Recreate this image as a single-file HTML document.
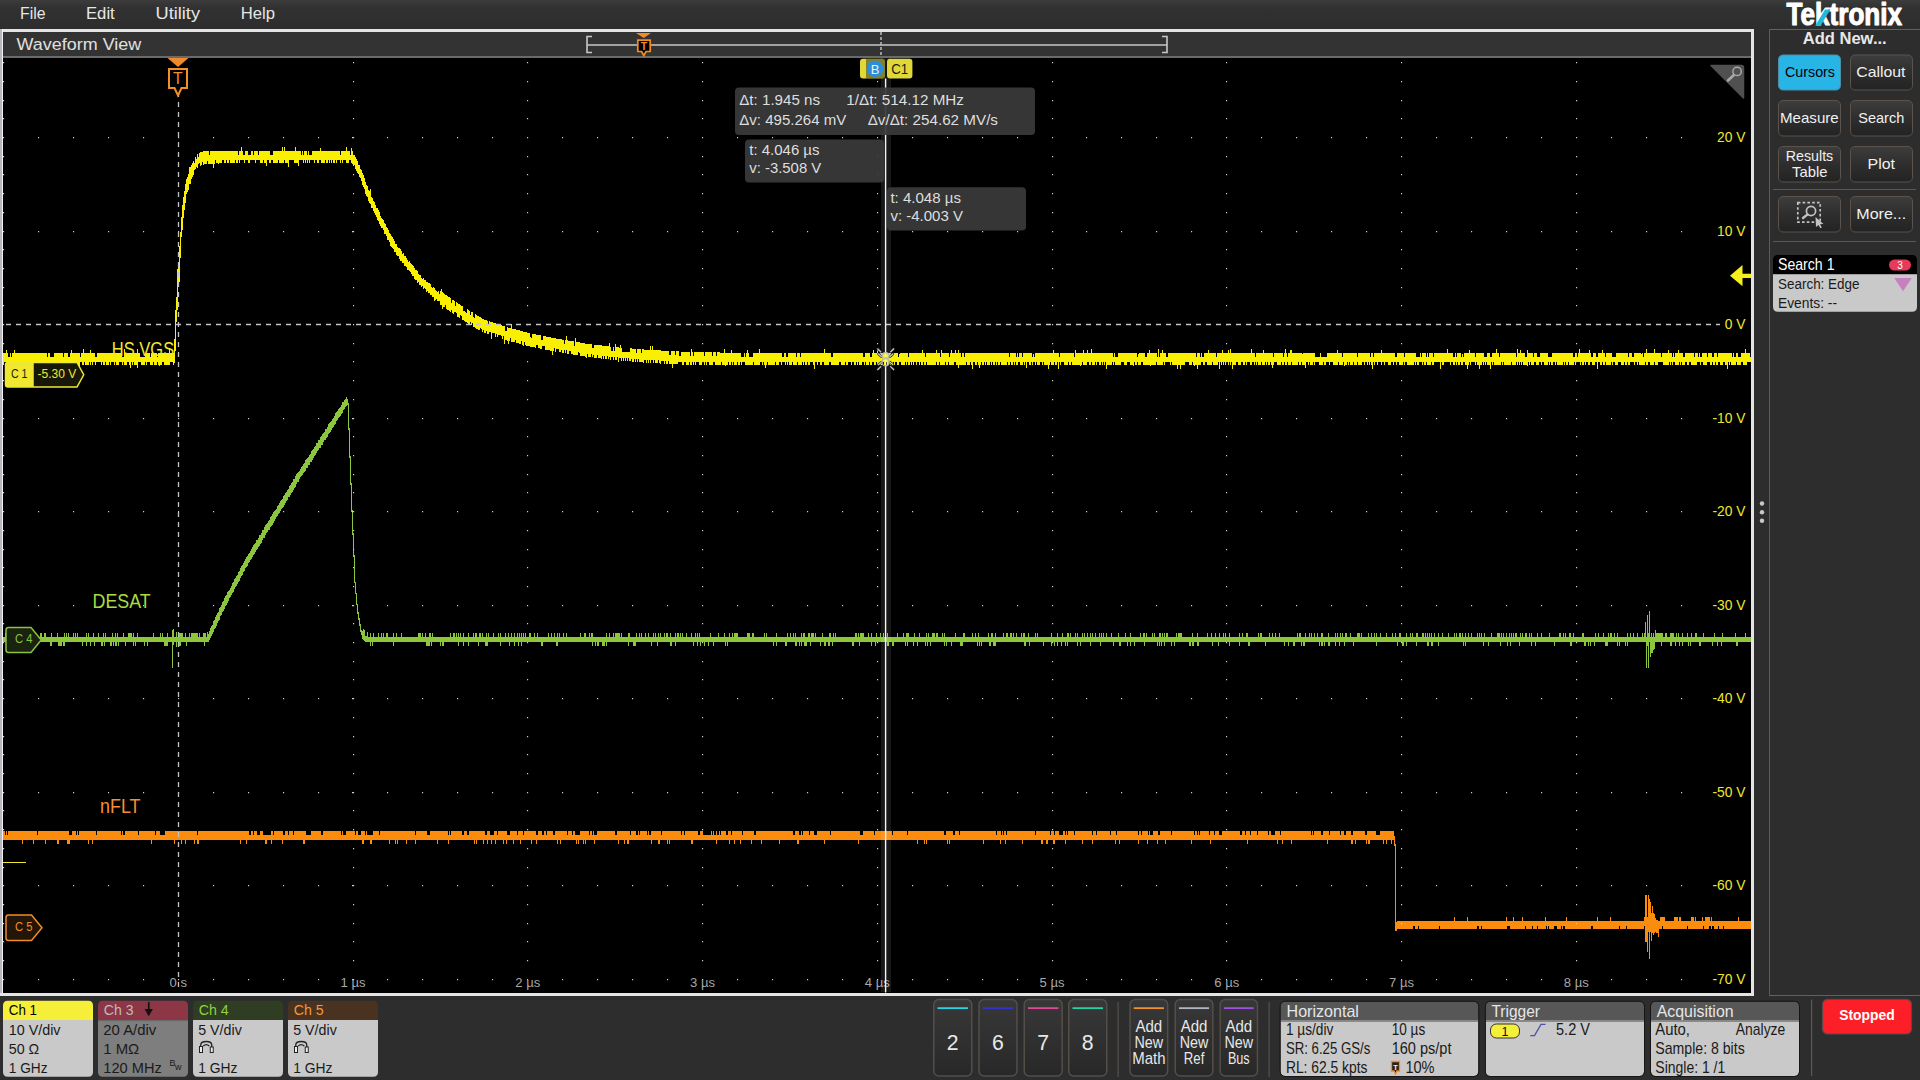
<!DOCTYPE html>
<html><head><meta charset="utf-8"><title>Waveform View</title>
<style>
html,body{margin:0;padding:0;}
body{width:1920px;height:1080px;overflow:hidden;position:relative;background:#2d2d2d;font-family:"Liberation Sans",sans-serif;}
#menubar{position:absolute;left:0;top:0;width:1920px;height:29px;background:linear-gradient(#3c3c3c 0px,#313131 8px,#2d2d2d 29px);}
#wave{position:absolute;left:0;top:0;width:1920px;height:1080px;}
svg text{font-family:"Liberation Sans",sans-serif;}
</style></head>
<body>
<div id="menubar"></div>
<svg id="wave" width="1920" height="1080" viewBox="0 0 1920 1080" font-family="Liberation Sans, sans-serif">
<defs>
<linearGradient id="btng" x1="0" y1="0" x2="0" y2="1"><stop offset="0" stop-color="#3d3d3d"/><stop offset="0.5" stop-color="#2e2e2e"/><stop offset="1" stop-color="#232323"/></linearGradient>
<linearGradient id="nbg" x1="0" y1="0" x2="0" y2="1"><stop offset="0" stop-color="#383838"/><stop offset="1" stop-color="#282828"/></linearGradient>
<clipPath id="gclip"><rect x="3" y="58" width="1748" height="935"/></clipPath>
</defs>
<rect x="3" y="58" width="1748" height="935" fill="#000"/>
<g clip-path="url(#gclip)">
<g shape-rendering="crispEdges" stroke-width="1" fill="none">
<path stroke="#fb8c0e" d="M3.5 831V840M4.5 831V840M5.5 835V840M6.5 831V840M7.5 835V840M8.5 831V840M9.5 831V840M10.5 831V840M11.5 831V840M12.5 831V840M13.5 831V840M14.5 831V840M15.5 831V840M16.5 831V840M17.5 831V840M18.5 831V840M19.5 831V840M20.5 831V840M21.5 831V840M22.5 831V844M23.5 831V840M24.5 831V840M25.5 831V840M26.5 831V840M27.5 831V840M28.5 831V840M29.5 831V840M30.5 831V840M31.5 831V840M32.5 831V840M33.5 831V844M34.5 831V840M35.5 831V840M36.5 831V840M37.5 835V840M38.5 831V840M39.5 831V840M40.5 831V840M41.5 831V840M42.5 831V840M43.5 831V840M44.5 831V840M45.5 831V844M46.5 831V840M47.5 831V840M48.5 831V840M49.5 831V840M50.5 831V840M51.5 831V840M52.5 831V840M53.5 831V840M54.5 831V840M55.5 831V840M56.5 831V840M57.5 831V844M58.5 831V844M59.5 831V840M60.5 831V840M61.5 831V840M62.5 831V840M63.5 831V840M64.5 831V840M65.5 831V840M66.5 831V840M67.5 831V844M68.5 831V844M69.5 835V844M70.5 835V840M71.5 835V840M72.5 831V840M73.5 831V840M74.5 831V840M75.5 831V840M76.5 835V840M77.5 831V840M78.5 835V840M79.5 831V840M80.5 831V840M81.5 831V840M82.5 831V840M83.5 831V840M84.5 831V840M85.5 831V840M86.5 831V840M87.5 831V840M88.5 831V844M89.5 831V840M90.5 831V840M91.5 831V840M92.5 831V844M93.5 831V840M94.5 831V840M95.5 831V840M96.5 835V840M97.5 831V840M98.5 831V840M99.5 831V840M100.5 831V840M101.5 831V840M102.5 831V840M103.5 831V840M104.5 831V840M105.5 831V840M106.5 831V840M107.5 831V840M108.5 831V840M109.5 831V840M110.5 831V840M111.5 831V840M112.5 831V840M113.5 831V840M114.5 831V840M115.5 831V840M116.5 831V840M117.5 831V840M118.5 831V840M119.5 831V840M120.5 831V840M121.5 835V840M122.5 831V840M123.5 835V840M124.5 835V840M125.5 831V840M126.5 831V840M127.5 831V840M128.5 831V840M129.5 831V840M130.5 831V840M131.5 831V840M132.5 831V840M133.5 831V840M134.5 831V840M135.5 831V840M136.5 831V840M137.5 831V840M138.5 835V840M139.5 831V840M140.5 831V840M141.5 831V840M142.5 831V840M143.5 831V840M144.5 831V840M145.5 831V840M146.5 831V840M147.5 831V840M148.5 831V840M149.5 831V840M150.5 831V840M151.5 831V844M152.5 831V840M153.5 831V840M154.5 831V840M155.5 835V840M156.5 831V840M157.5 831V840M158.5 831V840M159.5 831V840M160.5 835V840M161.5 835V840M162.5 835V840M163.5 835V840M164.5 835V840M165.5 831V840M166.5 831V840M167.5 831V840M168.5 831V840M169.5 831V840M170.5 831V840M171.5 831V840M172.5 831V840M173.5 831V840M174.5 831V844M175.5 831V840M176.5 831V840M177.5 831V840M178.5 831V840M179.5 831V840M180.5 831V840M181.5 831V844M182.5 831V840M183.5 831V840M184.5 831V840M185.5 831V844M186.5 831V840M187.5 831V840M188.5 831V840M189.5 831V840M190.5 831V840M191.5 831V840M192.5 831V840M193.5 831V840M194.5 831V844M195.5 831V840M196.5 831V840M197.5 835V844M198.5 831V844M199.5 831V840M200.5 831V840M201.5 831V840M202.5 831V840M203.5 831V840M204.5 831V840M205.5 831V840M206.5 831V840M207.5 831V840M208.5 831V840M209.5 831V840M210.5 831V840M211.5 831V840M212.5 831V840M213.5 831V840M214.5 831V840M215.5 831V840M216.5 831V840M217.5 831V840M218.5 831V840M219.5 831V840M220.5 831V840M221.5 831V840M222.5 831V840M223.5 831V840M224.5 831V840M225.5 831V840M226.5 831V840M227.5 831V840M228.5 831V840M229.5 831V840M230.5 831V840M231.5 831V840M232.5 831V840M233.5 831V840M234.5 831V840M235.5 831V840M236.5 831V840M237.5 831V840M238.5 831V840M239.5 831V840M240.5 831V844M241.5 831V840M242.5 831V840M243.5 831V840M244.5 831V840M245.5 831V840M246.5 831V844M247.5 831V840M248.5 831V840M249.5 835V840M250.5 835V840M251.5 831V840M252.5 831V840M253.5 835V840M254.5 831V840M255.5 831V840M256.5 831V840M257.5 835V840M258.5 835V840M259.5 835V840M260.5 831V840M261.5 831V840M262.5 831V840M263.5 835V840M264.5 835V840M265.5 835V844M266.5 835V844M267.5 835V840M268.5 835V840M269.5 835V840M270.5 835V840M271.5 831V844M272.5 831V840M273.5 835V840M274.5 831V840M275.5 831V840M276.5 831V840M277.5 831V840M278.5 831V840M279.5 831V840M280.5 831V840M281.5 831V840M282.5 831V844M283.5 835V840M284.5 835V840M285.5 831V840M286.5 831V840M287.5 831V840M288.5 835V840M289.5 831V840M290.5 831V840M291.5 831V840M292.5 831V840M293.5 835V840M294.5 831V840M295.5 831V840M296.5 831V840M297.5 831V840M298.5 831V840M299.5 831V840M300.5 831V840M301.5 831V840M302.5 831V840M303.5 831V844M304.5 831V844M305.5 831V840M306.5 835V840M307.5 835V840M308.5 835V840M309.5 835V840M310.5 835V840M311.5 831V840M312.5 831V840M313.5 831V840M314.5 831V840M315.5 831V840M316.5 831V840M317.5 831V840M318.5 831V840M319.5 831V840M320.5 831V840M321.5 835V840M322.5 835V840M323.5 831V840M324.5 831V840M325.5 831V840M326.5 831V840M327.5 831V840M328.5 831V840M329.5 831V840M330.5 831V840M331.5 831V840M332.5 831V840M333.5 831V840M334.5 831V840M335.5 831V840M336.5 831V840M337.5 831V840M338.5 831V840M339.5 831V840M340.5 831V840M341.5 835V840M342.5 831V840M343.5 835V840M344.5 835V840M345.5 835V840M346.5 831V840M347.5 831V840M348.5 831V840M349.5 831V840M350.5 831V840M351.5 831V840M352.5 831V840M353.5 831V840M354.5 831V840M355.5 835V840M356.5 831V840M357.5 831V840M358.5 835V840M359.5 835V840M360.5 835V840M361.5 831V840M362.5 831V844M363.5 831V844M364.5 831V840M365.5 835V840M366.5 831V840M367.5 835V840M368.5 835V840M369.5 835V840M370.5 835V844M371.5 835V844M372.5 835V840M373.5 831V840M374.5 831V840M375.5 831V840M376.5 831V840M377.5 831V840M378.5 831V840M379.5 835V840M380.5 831V840M381.5 831V840M382.5 831V840M383.5 831V840M384.5 831V840M385.5 831V840M386.5 831V840M387.5 831V840M388.5 831V840M389.5 831V844M390.5 831V840M391.5 831V840M392.5 831V840M393.5 831V840M394.5 831V840M395.5 831V844M396.5 831V840M397.5 831V844M398.5 831V840M399.5 831V840M400.5 831V840M401.5 831V840M402.5 831V840M403.5 831V840M404.5 831V840M405.5 831V840M406.5 831V844M407.5 831V840M408.5 831V840M409.5 831V840M410.5 831V840M411.5 831V840M412.5 831V840M413.5 831V840M414.5 831V840M415.5 835V844M416.5 831V840M417.5 831V840M418.5 831V840M419.5 831V840M420.5 831V840M421.5 831V840M422.5 831V840M423.5 831V840M424.5 831V840M425.5 831V840M426.5 831V840M427.5 835V840M428.5 835V840M429.5 835V840M430.5 831V840M431.5 831V840M432.5 831V840M433.5 831V840M434.5 831V840M435.5 831V840M436.5 831V840M437.5 831V844M438.5 831V840M439.5 831V840M440.5 831V840M441.5 831V840M442.5 831V840M443.5 831V840M444.5 831V840M445.5 831V840M446.5 831V840M447.5 831V840M448.5 835V844M449.5 831V840M450.5 835V840M451.5 831V840M452.5 831V840M453.5 831V840M454.5 831V840M455.5 831V840M456.5 831V840M457.5 831V840M458.5 831V840M459.5 831V840M460.5 831V840M461.5 831V840M462.5 835V840M463.5 835V840M464.5 831V840M465.5 831V840M466.5 831V840M467.5 835V840M468.5 835V840M469.5 831V840M470.5 831V840M471.5 831V840M472.5 831V840M473.5 831V840M474.5 831V844M475.5 831V840M476.5 831V844M477.5 831V840M478.5 831V840M479.5 831V840M480.5 831V840M481.5 831V840M482.5 831V840M483.5 831V844M484.5 831V840M485.5 835V840M486.5 835V840M487.5 831V844M488.5 831V840M489.5 831V840M490.5 835V840M491.5 835V844M492.5 835V840M493.5 835V840M494.5 831V840M495.5 831V844M496.5 831V840M497.5 835V840M498.5 831V840M499.5 831V840M500.5 831V840M501.5 831V840M502.5 831V840M503.5 831V844M504.5 831V840M505.5 831V840M506.5 831V844M507.5 835V840M508.5 835V840M509.5 835V840M510.5 831V840M511.5 831V840M512.5 831V840M513.5 831V844M514.5 831V840M515.5 831V840M516.5 831V840M517.5 835V840M518.5 831V840M519.5 831V840M520.5 831V844M521.5 831V840M522.5 831V840M523.5 835V840M524.5 831V840M525.5 831V840M526.5 831V840M527.5 831V840M528.5 831V840M529.5 831V840M530.5 831V840M531.5 831V844M532.5 831V840M533.5 831V840M534.5 831V840M535.5 831V840M536.5 835V844M537.5 835V840M538.5 831V840M539.5 831V840M540.5 831V840M541.5 831V840M542.5 835V840M543.5 835V840M544.5 831V840M545.5 831V840M546.5 835V840M547.5 831V840M548.5 831V840M549.5 831V840M550.5 831V840M551.5 831V840M552.5 831V840M553.5 835V840M554.5 835V840M555.5 831V840M556.5 831V840M557.5 831V844M558.5 831V840M559.5 831V840M560.5 831V844M561.5 831V840M562.5 831V840M563.5 831V840M564.5 831V840M565.5 831V840M566.5 831V840M567.5 835V840M568.5 831V840M569.5 831V840M570.5 831V840M571.5 831V840M572.5 835V840M573.5 831V840M574.5 831V840M575.5 835V840M576.5 835V844M577.5 835V840M578.5 835V844M579.5 835V840M580.5 831V840M581.5 831V840M582.5 831V840M583.5 831V844M584.5 831V840M585.5 831V844M586.5 831V840M587.5 831V840M588.5 831V840M589.5 835V840M590.5 831V840M591.5 831V840M592.5 835V840M593.5 831V840M594.5 835V844M595.5 835V840M596.5 835V840M597.5 831V840M598.5 831V840M599.5 831V840M600.5 831V840M601.5 831V840M602.5 831V840M603.5 831V840M604.5 831V840M605.5 831V840M606.5 831V840M607.5 831V840M608.5 831V840M609.5 831V840M610.5 831V840M611.5 831V840M612.5 831V840M613.5 831V840M614.5 831V840M615.5 835V840M616.5 835V840M617.5 831V840M618.5 831V844M619.5 831V840M620.5 831V840M621.5 831V840M622.5 831V840M623.5 831V840M624.5 831V844M625.5 831V840M626.5 831V840M627.5 831V844M628.5 831V844M629.5 831V840M630.5 835V840M631.5 831V840M632.5 831V840M633.5 831V840M634.5 831V840M635.5 831V840M636.5 835V840M637.5 835V840M638.5 831V840M639.5 835V840M640.5 831V840M641.5 831V840M642.5 831V840M643.5 831V840M644.5 831V840M645.5 831V840M646.5 831V840M647.5 835V840M648.5 831V840M649.5 835V840M650.5 835V840M651.5 831V844M652.5 831V840M653.5 831V840M654.5 831V840M655.5 831V840M656.5 831V840M657.5 831V840M658.5 831V844M659.5 831V844M660.5 831V840M661.5 835V840M662.5 831V840M663.5 831V840M664.5 831V840M665.5 831V840M666.5 831V840M667.5 831V844M668.5 831V840M669.5 831V844M670.5 831V840M671.5 831V840M672.5 831V840M673.5 831V840M674.5 831V840M675.5 831V840M676.5 831V840M677.5 831V840M678.5 831V840M679.5 831V840M680.5 831V840M681.5 835V840M682.5 831V840M683.5 831V840M684.5 835V840M685.5 831V840M686.5 831V840M687.5 831V840M688.5 831V840M689.5 831V840M690.5 831V840M691.5 831V844M692.5 831V844M693.5 831V840M694.5 831V840M695.5 831V840M696.5 831V840M697.5 831V840M698.5 835V840M699.5 835V840M700.5 831V840M701.5 831V840M702.5 831V840M703.5 835V840M704.5 835V840M705.5 835V840M706.5 835V840M707.5 835V840M708.5 835V840M709.5 835V840M710.5 835V840M711.5 831V840M712.5 835V840M713.5 831V840M714.5 835V840M715.5 835V840M716.5 831V844M717.5 835V840M718.5 835V840M719.5 831V840M720.5 835V840M721.5 831V840M722.5 831V840M723.5 831V840M724.5 831V840M725.5 831V840M726.5 835V840M727.5 835V840M728.5 831V840M729.5 831V844M730.5 831V840M731.5 835V840M732.5 831V840M733.5 831V840M734.5 831V844M735.5 831V840M736.5 831V840M737.5 831V840M738.5 831V840M739.5 831V840M740.5 831V844M741.5 831V840M742.5 835V840M743.5 831V840M744.5 831V840M745.5 831V840M746.5 831V840M747.5 831V840M748.5 831V840M749.5 831V840M750.5 831V840M751.5 831V844M752.5 831V840M753.5 831V840M754.5 835V840M755.5 835V840M756.5 831V840M757.5 831V840M758.5 831V840M759.5 831V840M760.5 831V840M761.5 831V844M762.5 831V840M763.5 831V840M764.5 831V840M765.5 831V840M766.5 831V840M767.5 831V840M768.5 831V840M769.5 831V840M770.5 831V840M771.5 831V840M772.5 831V840M773.5 831V840M774.5 831V840M775.5 831V840M776.5 831V840M777.5 831V840M778.5 831V840M779.5 831V844M780.5 831V840M781.5 831V840M782.5 831V840M783.5 831V840M784.5 831V840M785.5 831V840M786.5 831V840M787.5 831V840M788.5 831V840M789.5 831V840M790.5 831V840M791.5 831V840M792.5 831V840M793.5 835V840M794.5 835V840M795.5 831V840M796.5 831V840M797.5 831V844M798.5 831V844M799.5 835V840M800.5 835V840M801.5 831V840M802.5 835V840M803.5 831V840M804.5 831V840M805.5 831V840M806.5 831V840M807.5 831V840M808.5 831V840M809.5 835V840M810.5 831V840M811.5 831V840M812.5 831V840M813.5 831V840M814.5 835V840M815.5 835V840M816.5 835V840M817.5 831V840M818.5 831V840M819.5 831V840M820.5 831V840M821.5 831V840M822.5 831V840M823.5 831V840M824.5 831V844M825.5 831V840M826.5 831V840M827.5 831V840M828.5 831V840M829.5 831V840M830.5 835V840M831.5 831V840M832.5 831V840M833.5 831V840M834.5 831V840M835.5 831V840M836.5 831V840M837.5 831V840M838.5 831V840M839.5 831V840M840.5 831V840M841.5 831V840M842.5 831V840M843.5 831V840M844.5 831V840M845.5 831V840M846.5 831V840M847.5 831V840M848.5 831V840M849.5 831V840M850.5 831V840M851.5 831V840M852.5 831V840M853.5 831V840M854.5 831V840M855.5 831V840M856.5 831V840M857.5 831V840M858.5 831V844M859.5 831V840M860.5 835V840M861.5 835V840M862.5 835V840M863.5 831V840M864.5 831V840M865.5 831V840M866.5 831V840M867.5 831V840M868.5 831V840M869.5 831V840M870.5 831V840M871.5 831V840M872.5 831V840M873.5 831V840M874.5 835V840M875.5 831V840M876.5 831V840M877.5 831V840M878.5 831V840M879.5 831V840M880.5 831V840M881.5 831V840M882.5 831V840M883.5 831V840M884.5 831V840M885.5 831V844M886.5 831V840M887.5 831V840M888.5 831V840M889.5 831V840M890.5 831V840M891.5 831V840M892.5 835V840M893.5 831V840M894.5 831V840M895.5 831V840M896.5 831V840M897.5 831V840M898.5 831V840M899.5 831V840M900.5 831V840M901.5 831V840M902.5 831V840M903.5 831V840M904.5 831V840M905.5 831V840M906.5 831V840M907.5 835V840M908.5 831V840M909.5 831V840M910.5 831V840M911.5 831V840M912.5 831V840M913.5 831V840M914.5 831V840M915.5 831V840M916.5 831V840M917.5 831V844M918.5 831V840M919.5 831V840M920.5 831V840M921.5 831V840M922.5 831V840M923.5 831V840M924.5 831V844M925.5 831V840M926.5 831V844M927.5 831V840M928.5 831V840M929.5 831V840M930.5 831V840M931.5 831V840M932.5 831V840M933.5 831V840M934.5 831V840M935.5 831V840M936.5 831V840M937.5 831V840M938.5 831V840M939.5 831V840M940.5 831V840M941.5 831V840M942.5 831V840M943.5 831V840M944.5 835V840M945.5 835V840M946.5 831V840M947.5 831V844M948.5 831V840M949.5 831V844M950.5 831V840M951.5 831V840M952.5 831V840M953.5 835V840M954.5 835V840M955.5 831V840M956.5 831V840M957.5 831V840M958.5 831V840M959.5 835V840M960.5 831V840M961.5 831V840M962.5 831V840M963.5 831V840M964.5 831V840M965.5 831V840M966.5 831V840M967.5 831V840M968.5 831V840M969.5 831V840M970.5 831V840M971.5 831V840M972.5 831V840M973.5 831V840M974.5 831V840M975.5 831V840M976.5 831V840M977.5 831V840M978.5 831V840M979.5 831V840M980.5 831V840M981.5 831V840M982.5 831V840M983.5 831V844M984.5 831V840M985.5 831V840M986.5 831V840M987.5 831V840M988.5 831V840M989.5 831V840M990.5 831V840M991.5 831V840M992.5 831V840M993.5 831V840M994.5 831V840M995.5 831V840M996.5 835V840M997.5 831V840M998.5 831V840M999.5 831V840M1000.5 831V844M1001.5 835V840M1002.5 831V840M1003.5 835V840M1004.5 831V840M1005.5 831V844M1006.5 835V840M1007.5 831V840M1008.5 831V840M1009.5 831V840M1010.5 831V840M1011.5 831V840M1012.5 831V840M1013.5 831V840M1014.5 831V840M1015.5 831V840M1016.5 831V840M1017.5 831V840M1018.5 831V840M1019.5 831V840M1020.5 831V840M1021.5 831V840M1022.5 831V844M1023.5 831V840M1024.5 831V840M1025.5 831V840M1026.5 831V840M1027.5 831V840M1028.5 831V840M1029.5 831V840M1030.5 831V840M1031.5 831V840M1032.5 831V840M1033.5 831V840M1034.5 831V840M1035.5 835V840M1036.5 831V840M1037.5 831V840M1038.5 831V840M1039.5 831V840M1040.5 831V840M1041.5 831V844M1042.5 831V844M1043.5 831V840M1044.5 831V840M1045.5 831V840M1046.5 831V844M1047.5 831V844M1048.5 831V840M1049.5 831V840M1050.5 835V840M1051.5 831V840M1052.5 831V840M1053.5 831V844M1054.5 835V844M1055.5 831V840M1056.5 831V840M1057.5 831V840M1058.5 831V840M1059.5 835V840M1060.5 835V840M1061.5 835V840M1062.5 835V840M1063.5 831V840M1064.5 831V840M1065.5 835V844M1066.5 831V840M1067.5 835V840M1068.5 831V840M1069.5 831V840M1070.5 831V840M1071.5 831V840M1072.5 831V840M1073.5 831V840M1074.5 835V840M1075.5 831V840M1076.5 831V840M1077.5 831V840M1078.5 831V840M1079.5 831V840M1080.5 831V840M1081.5 831V840M1082.5 831V844M1083.5 831V840M1084.5 831V840M1085.5 831V840M1086.5 831V840M1087.5 831V840M1088.5 831V840M1089.5 831V840M1090.5 831V840M1091.5 831V840M1092.5 835V844M1093.5 831V840M1094.5 831V840M1095.5 831V840M1096.5 835V840M1097.5 831V840M1098.5 831V840M1099.5 831V840M1100.5 831V840M1101.5 831V840M1102.5 831V840M1103.5 831V840M1104.5 831V840M1105.5 831V840M1106.5 831V840M1107.5 831V840M1108.5 831V840M1109.5 831V840M1110.5 835V840M1111.5 831V840M1112.5 831V840M1113.5 831V840M1114.5 831V840M1115.5 831V844M1116.5 835V840M1117.5 831V840M1118.5 831V840M1119.5 831V844M1120.5 831V840M1121.5 831V840M1122.5 831V840M1123.5 831V840M1124.5 831V840M1125.5 831V840M1126.5 831V840M1127.5 831V840M1128.5 831V840M1129.5 831V840M1130.5 831V840M1131.5 831V840M1132.5 831V840M1133.5 831V840M1134.5 831V840M1135.5 831V840M1136.5 831V840M1137.5 831V840M1138.5 835V844M1139.5 831V840M1140.5 831V840M1141.5 835V840M1142.5 831V840M1143.5 831V840M1144.5 831V840M1145.5 831V840M1146.5 831V840M1147.5 831V844M1148.5 835V840M1149.5 831V840M1150.5 835V840M1151.5 835V840M1152.5 835V840M1153.5 831V840M1154.5 831V840M1155.5 831V840M1156.5 831V840M1157.5 831V844M1158.5 835V840M1159.5 835V840M1160.5 831V840M1161.5 831V840M1162.5 831V840M1163.5 831V840M1164.5 831V840M1165.5 831V844M1166.5 831V840M1167.5 831V840M1168.5 831V840M1169.5 831V840M1170.5 831V840M1171.5 835V840M1172.5 831V840M1173.5 831V840M1174.5 831V840M1175.5 831V840M1176.5 831V840M1177.5 831V840M1178.5 831V840M1179.5 831V840M1180.5 831V840M1181.5 831V840M1182.5 831V840M1183.5 831V840M1184.5 831V840M1185.5 831V840M1186.5 831V840M1187.5 831V840M1188.5 831V840M1189.5 831V840M1190.5 831V840M1191.5 831V844M1192.5 831V840M1193.5 831V840M1194.5 835V840M1195.5 831V840M1196.5 831V840M1197.5 835V840M1198.5 831V840M1199.5 835V840M1200.5 831V840M1201.5 831V840M1202.5 831V840M1203.5 831V840M1204.5 831V840M1205.5 831V840M1206.5 831V840M1207.5 831V840M1208.5 831V840M1209.5 835V840M1210.5 831V844M1211.5 831V840M1212.5 831V840M1213.5 831V840M1214.5 835V840M1215.5 831V840M1216.5 831V840M1217.5 831V840M1218.5 831V840M1219.5 835V840M1220.5 835V840M1221.5 835V840M1222.5 831V840M1223.5 831V840M1224.5 831V840M1225.5 831V840M1226.5 831V840M1227.5 831V840M1228.5 831V840M1229.5 831V840M1230.5 831V840M1231.5 831V840M1232.5 831V840M1233.5 831V840M1234.5 831V840M1235.5 831V840M1236.5 831V840M1237.5 831V840M1238.5 831V840M1239.5 831V840M1240.5 835V840M1241.5 835V840M1242.5 831V840M1243.5 831V840M1244.5 831V840M1245.5 835V840M1246.5 831V840M1247.5 831V844M1248.5 831V840M1249.5 831V840M1250.5 835V840M1251.5 831V840M1252.5 831V840M1253.5 831V840M1254.5 831V840M1255.5 831V840M1256.5 831V840M1257.5 835V840M1258.5 831V840M1259.5 831V840M1260.5 831V840M1261.5 831V840M1262.5 831V840M1263.5 831V840M1264.5 831V840M1265.5 831V840M1266.5 831V840M1267.5 831V840M1268.5 835V840M1269.5 831V840M1270.5 831V840M1271.5 835V840M1272.5 835V840M1273.5 835V840M1274.5 835V840M1275.5 831V840M1276.5 831V840M1277.5 831V844M1278.5 831V840M1279.5 831V840M1280.5 835V840M1281.5 831V840M1282.5 831V844M1283.5 831V840M1284.5 831V840M1285.5 831V840M1286.5 831V840M1287.5 831V840M1288.5 831V840M1289.5 831V840M1290.5 831V840M1291.5 831V844M1292.5 831V840M1293.5 831V840M1294.5 831V840M1295.5 831V840M1296.5 831V840M1297.5 831V840M1298.5 831V840M1299.5 831V840M1300.5 831V840M1301.5 831V840M1302.5 831V840M1303.5 831V840M1304.5 831V840M1305.5 831V840M1306.5 831V840M1307.5 831V840M1308.5 831V840M1309.5 831V840M1310.5 831V840M1311.5 835V840M1312.5 831V840M1313.5 835V840M1314.5 831V840M1315.5 831V840M1316.5 831V840M1317.5 831V840M1318.5 831V840M1319.5 831V840M1320.5 831V840M1321.5 835V840M1322.5 835V840M1323.5 831V840M1324.5 831V840M1325.5 831V840M1326.5 831V840M1327.5 831V844M1328.5 831V840M1329.5 835V840M1330.5 831V840M1331.5 831V840M1332.5 831V840M1333.5 831V840M1334.5 831V840M1335.5 831V840M1336.5 831V840M1337.5 831V840M1338.5 831V840M1339.5 831V840M1340.5 835V840M1341.5 831V840M1342.5 831V840M1343.5 831V840M1344.5 835V840M1345.5 835V840M1346.5 831V840M1347.5 831V840M1348.5 831V840M1349.5 831V840M1350.5 831V840M1351.5 835V844M1352.5 835V844M1353.5 831V840M1354.5 831V840M1355.5 831V844M1356.5 831V840M1357.5 831V840M1358.5 831V840M1359.5 831V840M1360.5 831V840M1361.5 831V840M1362.5 831V840M1363.5 831V840M1364.5 831V840M1365.5 835V840M1366.5 835V844M1367.5 831V840M1368.5 831V844M1369.5 831V844M1370.5 831V840M1371.5 831V840M1372.5 831V840M1373.5 831V840M1374.5 831V840M1375.5 831V840M1376.5 835V840M1377.5 835V840M1378.5 835V840M1379.5 835V840M1380.5 831V840M1381.5 831V840M1382.5 831V840M1383.5 831V844M1384.5 831V840M1385.5 831V840M1386.5 831V844M1387.5 831V840M1388.5 831V840M1389.5 831V840M1390.5 831V840M1391.5 831V844M1392.5 831V840M1393.5 831V840M1394.5 836V846M1395.5 844V931M1396.5 922V931M1397.5 921V929M1398.5 921V929M1399.5 921V929M1400.5 921V929M1401.5 921V929M1402.5 921V929M1403.5 921V929M1404.5 921V929M1405.5 921V929M1406.5 921V929M1407.5 921V929M1408.5 921V929M1409.5 921V929M1410.5 921V929M1411.5 921V929M1412.5 921V929M1413.5 921V926M1414.5 921V926M1415.5 921V929M1416.5 921V929M1417.5 921V929M1418.5 921V926M1419.5 921V929M1420.5 921V929M1421.5 921V929M1422.5 921V929M1423.5 921V929M1424.5 921V929M1425.5 921V929M1426.5 921V929M1427.5 921V929M1428.5 921V929M1429.5 921V929M1430.5 921V929M1431.5 921V929M1432.5 921V929M1433.5 921V929M1434.5 921V929M1435.5 921V929M1436.5 921V929M1437.5 921V929M1438.5 921V929M1439.5 921V926M1440.5 921V929M1441.5 921V929M1442.5 921V929M1443.5 921V929M1444.5 921V929M1445.5 921V929M1446.5 921V929M1447.5 921V929M1448.5 921V929M1449.5 921V929M1450.5 921V929M1451.5 921V929M1452.5 921V929M1453.5 921V929M1454.5 917V929M1455.5 921V929M1456.5 921V929M1457.5 921V929M1458.5 921V929M1459.5 921V929M1460.5 921V929M1461.5 921V929M1462.5 921V929M1463.5 921V929M1464.5 921V929M1465.5 921V929M1466.5 921V929M1467.5 917V929M1468.5 921V929M1469.5 921V929M1470.5 921V929M1471.5 921V929M1472.5 921V929M1473.5 921V929M1474.5 921V929M1475.5 921V929M1476.5 921V929M1477.5 921V926M1478.5 921V926M1479.5 921V929M1480.5 921V929M1481.5 921V926M1482.5 921V929M1483.5 921V929M1484.5 921V929M1485.5 921V929M1486.5 921V929M1487.5 921V929M1488.5 921V929M1489.5 921V929M1490.5 921V929M1491.5 921V929M1492.5 921V929M1493.5 921V929M1494.5 921V929M1495.5 921V929M1496.5 921V929M1497.5 921V929M1498.5 921V929M1499.5 921V929M1500.5 921V929M1501.5 921V929M1502.5 921V929M1503.5 921V929M1504.5 921V929M1505.5 921V929M1506.5 917V929M1507.5 921V926M1508.5 921V926M1509.5 921V926M1510.5 921V929M1511.5 921V929M1512.5 921V929M1513.5 917V929M1514.5 921V929M1515.5 921V929M1516.5 921V929M1517.5 921V929M1518.5 921V929M1519.5 921V929M1520.5 921V929M1521.5 921V929M1522.5 917V929M1523.5 921V929M1524.5 921V929M1525.5 921V926M1526.5 921V929M1527.5 921V929M1528.5 921V929M1529.5 921V929M1530.5 921V929M1531.5 921V929M1532.5 921V926M1533.5 921V929M1534.5 921V929M1535.5 921V929M1536.5 921V929M1537.5 921V926M1538.5 921V929M1539.5 921V929M1540.5 921V929M1541.5 921V929M1542.5 921V929M1543.5 921V929M1544.5 921V929M1545.5 917V929M1546.5 921V926M1547.5 921V929M1548.5 921V926M1549.5 921V929M1550.5 921V929M1551.5 921V929M1552.5 921V929M1553.5 921V929M1554.5 921V926M1555.5 921V926M1556.5 921V926M1557.5 921V929M1558.5 921V929M1559.5 921V929M1560.5 921V929M1561.5 921V926M1562.5 921V929M1563.5 921V926M1564.5 921V926M1565.5 921V929M1566.5 917V929M1567.5 921V929M1568.5 921V929M1569.5 921V929M1570.5 921V929M1571.5 921V929M1572.5 921V929M1573.5 921V929M1574.5 921V929M1575.5 921V929M1576.5 921V929M1577.5 921V929M1578.5 921V929M1579.5 921V929M1580.5 921V929M1581.5 921V929M1582.5 921V929M1583.5 921V929M1584.5 921V929M1585.5 921V929M1586.5 921V929M1587.5 921V929M1588.5 921V929M1589.5 921V929M1590.5 921V929M1591.5 921V926M1592.5 921V926M1593.5 921V929M1594.5 921V929M1595.5 921V929M1596.5 921V929M1597.5 917V929M1598.5 921V929M1599.5 921V929M1600.5 921V929M1601.5 921V929M1602.5 921V929M1603.5 921V929M1604.5 921V929M1605.5 921V929M1606.5 921V929M1607.5 921V929M1608.5 921V929M1609.5 921V929M1610.5 917V929M1611.5 921V929M1612.5 921V929M1613.5 921V929M1614.5 921V929M1615.5 921V929M1616.5 921V929M1617.5 921V929M1618.5 921V929M1619.5 921V926M1620.5 921V929M1621.5 921V929M1622.5 921V929M1623.5 921V929M1624.5 921V929M1625.5 921V929M1626.5 921V926M1627.5 921V929M1628.5 921V929M1629.5 921V929M1630.5 921V929M1631.5 921V929M1632.5 921V929M1633.5 921V929M1634.5 921V929M1635.5 921V929M1636.5 921V929M1637.5 921V929M1638.5 921V929M1639.5 921V929M1640.5 921V929M1641.5 921V929M1642.5 921V929M1643.5 921V929M1644.5 917V926M1645.5 895V942M1646.5 895V942M1647.5 917V952M1648.5 895V932M1649.5 899V959M1650.5 902V932M1651.5 913V941M1652.5 906V933M1653.5 913V935M1654.5 914V933M1655.5 918V932M1656.5 920V933M1657.5 920V933M1658.5 921V937M1659.5 921V929M1660.5 917V929M1661.5 917V929M1662.5 917V926M1663.5 917V929M1664.5 917V929M1665.5 921V929M1666.5 921V929M1667.5 921V929M1668.5 921V929M1669.5 921V929M1670.5 921V929M1671.5 921V929M1672.5 921V929M1673.5 921V929M1674.5 917V929M1675.5 917V929M1676.5 917V929M1677.5 917V929M1678.5 921V929M1679.5 917V929M1680.5 917V929M1681.5 921V929M1682.5 921V929M1683.5 921V929M1684.5 921V929M1685.5 921V929M1686.5 921V929M1687.5 921V926M1688.5 921V929M1689.5 921V929M1690.5 921V929M1691.5 917V929M1692.5 917V929M1693.5 917V929M1694.5 921V929M1695.5 917V929M1696.5 921V929M1697.5 921V929M1698.5 921V929M1699.5 921V929M1700.5 921V929M1701.5 921V929M1702.5 917V929M1703.5 921V926M1704.5 921V929M1705.5 917V929M1706.5 917V929M1707.5 917V929M1708.5 917V929M1709.5 917V926M1710.5 921V926M1711.5 917V929M1712.5 921V926M1713.5 921V926M1714.5 921V929M1715.5 921V929M1716.5 921V929M1717.5 921V929M1718.5 921V926M1719.5 921V929M1720.5 921V929M1721.5 921V929M1722.5 921V929M1723.5 921V926M1724.5 921V929M1725.5 921V929M1726.5 921V929M1727.5 921V929M1728.5 921V929M1729.5 921V929M1730.5 921V929M1731.5 921V929M1732.5 921V929M1733.5 921V929M1734.5 921V929M1735.5 921V929M1736.5 921V929M1737.5 921V929M1738.5 917V929M1739.5 921V929M1740.5 921V929M1741.5 921V929M1742.5 921V929M1743.5 921V929M1744.5 921V929M1745.5 921V929M1746.5 921V929M1747.5 921V929M1748.5 921V929M1749.5 921V929M1750.5 921V929"/>
<path stroke="#8bc63e" d="M3.5 637V642M4.5 637V642M5.5 633V642M6.5 637V642M7.5 633V642M8.5 637V642M9.5 637V642M10.5 637V646M11.5 633V642M12.5 637V642M13.5 633V642M14.5 633V642M15.5 637V642M16.5 637V642M17.5 637V642M18.5 637V642M19.5 637V642M20.5 637V642M21.5 637V642M22.5 637V642M23.5 633V646M24.5 637V642M25.5 637V642M26.5 637V646M27.5 637V642M28.5 637V642M29.5 633V642M30.5 637V646M31.5 637V642M32.5 637V642M33.5 637V642M34.5 637V642M35.5 633V646M36.5 637V642M37.5 637V642M38.5 637V642M39.5 637V642M40.5 633V642M41.5 633V642M42.5 637V642M43.5 637V642M44.5 633V642M45.5 633V642M46.5 637V642M47.5 637V642M48.5 637V642M49.5 637V642M50.5 637V646M51.5 633V646M52.5 637V642M53.5 637V642M54.5 637V642M55.5 637V642M56.5 637V642M57.5 633V642M58.5 637V646M59.5 637V646M60.5 637V646M61.5 637V646M62.5 637V642M63.5 637V646M64.5 633V646M65.5 637V642M66.5 633V642M67.5 637V642M68.5 633V642M69.5 637V642M70.5 637V642M71.5 637V642M72.5 637V642M73.5 633V642M74.5 637V642M75.5 633V642M76.5 637V642M77.5 633V642M78.5 637V642M79.5 637V642M80.5 637V642M81.5 637V642M82.5 637V646M83.5 637V642M84.5 637V642M85.5 637V642M86.5 633V646M87.5 637V642M88.5 633V642M89.5 637V642M90.5 637V646M91.5 637V642M92.5 637V642M93.5 633V642M94.5 637V646M95.5 637V642M96.5 637V642M97.5 637V642M98.5 633V642M99.5 637V642M100.5 637V642M101.5 637V646M102.5 637V646M103.5 633V642M104.5 637V646M105.5 633V642M106.5 637V642M107.5 637V642M108.5 637V642M109.5 637V642M110.5 637V646M111.5 637V646M112.5 633V642M113.5 637V646M114.5 637V642M115.5 633V646M116.5 637V646M117.5 633V642M118.5 637V646M119.5 637V642M120.5 637V642M121.5 637V642M122.5 637V642M123.5 633V642M124.5 637V642M125.5 637V646M126.5 637V642M127.5 637V642M128.5 633V642M129.5 633V642M130.5 633V642M131.5 633V642M132.5 637V642M133.5 633V646M134.5 637V642M135.5 637V646M136.5 637V642M137.5 633V642M138.5 637V642M139.5 637V642M140.5 637V642M141.5 637V642M142.5 637V642M143.5 637V642M144.5 637V646M145.5 637V642M146.5 637V642M147.5 637V646M148.5 637V642M149.5 637V642M150.5 637V642M151.5 637V642M152.5 637V642M153.5 633V642M154.5 637V642M155.5 637V642M156.5 637V642M157.5 637V642M158.5 637V642M159.5 637V642M160.5 633V642M161.5 637V642M162.5 633V642M163.5 637V642M164.5 637V646M165.5 637V646M166.5 637V646M167.5 633V646M168.5 637V642M169.5 637V642M170.5 637V642M171.5 637V642M172.5 630V668M173.5 629V645M174.5 637V642M175.5 637V642M176.5 632V647M177.5 637V642M178.5 637V642M179.5 633V646M180.5 633V646M181.5 633V642M182.5 633V642M183.5 637V642M184.5 637V642M185.5 633V642M186.5 637V646M187.5 637V642M188.5 637V642M189.5 633V642M190.5 637V642M191.5 633V642M192.5 633V642M193.5 633V642M194.5 633V642M195.5 633V642M196.5 633V642M197.5 633V642M198.5 637V642M199.5 633V642M200.5 637V642M201.5 637V642M202.5 637V642M203.5 633V642M204.5 633V646M205.5 633V642M206.5 637V642M207.5 632V642M208.5 634V642M209.5 631V640M210.5 628V638M211.5 626V636M212.5 625V634M213.5 621V632M214.5 620V629M215.5 617V628M216.5 615V626M217.5 613V623M218.5 612V621M219.5 608V620M220.5 607V616M221.5 605V615M222.5 602V612M223.5 601V611M224.5 598V609M225.5 596V606M226.5 595V605M227.5 592V603M228.5 591V601M229.5 590V598M230.5 588V597M231.5 586V595M232.5 583V593M233.5 582V592M234.5 579V589M235.5 578V587M236.5 576V586M237.5 575V584M238.5 572V582M239.5 571V581M240.5 568V578M241.5 566V576M242.5 565V575M243.5 563V572M244.5 561V571M245.5 559V568M246.5 557V567M247.5 556V566M248.5 554V563M249.5 553V562M250.5 551V560M251.5 549V559M252.5 547V557M253.5 545V555M254.5 544V554M255.5 543V552M256.5 540V550M257.5 540V549M258.5 538V547M259.5 535V546M260.5 535V544M261.5 533V543M262.5 530V540M263.5 530V538M264.5 527V538M265.5 525V535M266.5 524V533M267.5 523V532M268.5 521V530M269.5 520V530M270.5 517V527M271.5 516V526M272.5 514V525M273.5 512V523M274.5 511V521M275.5 510V519M276.5 509V517M277.5 506V516M278.5 505V514M279.5 503V513M280.5 501V511M281.5 500V509M282.5 499V508M283.5 496V507M284.5 495V505M285.5 493V503M286.5 492V501M287.5 490V500M288.5 489V497M289.5 486V497M290.5 485V495M291.5 483V493M292.5 482V492M293.5 479V490M294.5 479V488M295.5 476V487M296.5 474V484M297.5 473V482M298.5 472V482M299.5 471V479M300.5 469V477M301.5 467V476M302.5 466V475M303.5 464V473M304.5 463V472M305.5 460V471M306.5 459V468M307.5 458V468M308.5 457V465M309.5 455V465M310.5 454V462M311.5 451V462M312.5 450V460M313.5 449V458M314.5 447V456M315.5 446V455M316.5 443V453M317.5 443V451M318.5 440V450M319.5 440V448M320.5 437V448M321.5 436V445M322.5 434V445M323.5 433V442M324.5 432V440M325.5 429V440M326.5 429V438M327.5 427V437M328.5 424V434M329.5 423V433M330.5 422V432M331.5 421V430M332.5 419V428M333.5 418V427M334.5 416V425M335.5 413V424M336.5 412V421M337.5 411V420M338.5 409V418M339.5 408V417M340.5 407V416M341.5 405V414M342.5 402V413M343.5 402V410M344.5 400V409M345.5 399V407M346.5 397V406M347.5 399V405M348.5 403V430M349.5 428V458M350.5 456V485M351.5 483V512M352.5 510V535M353.5 533V557M354.5 555V583M355.5 582V594M356.5 593V605M357.5 604V614M358.5 612V620M359.5 618V626M360.5 624V632M361.5 630V635M362.5 631V639M363.5 629V640M364.5 630V641M365.5 636V642M366.5 636V642M367.5 632V642M368.5 637V642M369.5 637V642M370.5 633V646M371.5 637V642M372.5 637V646M373.5 633V642M374.5 637V642M375.5 637V642M376.5 637V642M377.5 637V642M378.5 633V642M379.5 637V642M380.5 637V642M381.5 633V642M382.5 637V642M383.5 633V642M384.5 637V642M385.5 637V642M386.5 633V642M387.5 633V642M388.5 637V642M389.5 637V642M390.5 637V642M391.5 637V642M392.5 637V642M393.5 633V646M394.5 637V642M395.5 637V642M396.5 633V642M397.5 637V642M398.5 637V642M399.5 637V642M400.5 637V642M401.5 633V642M402.5 637V642M403.5 637V642M404.5 637V642M405.5 637V642M406.5 637V642M407.5 637V642M408.5 637V642M409.5 637V642M410.5 637V642M411.5 637V642M412.5 637V642M413.5 637V642M414.5 637V642M415.5 637V642M416.5 637V642M417.5 637V642M418.5 633V642M419.5 633V642M420.5 633V642M421.5 637V642M422.5 633V642M423.5 637V642M424.5 637V642M425.5 633V642M426.5 637V646M427.5 637V646M428.5 637V646M429.5 633V646M430.5 633V642M431.5 637V646M432.5 633V642M433.5 637V642M434.5 637V642M435.5 637V642M436.5 637V642M437.5 637V642M438.5 637V642M439.5 637V642M440.5 637V646M441.5 637V642M442.5 637V646M443.5 637V646M444.5 637V642M445.5 637V642M446.5 637V642M447.5 637V642M448.5 637V642M449.5 637V642M450.5 633V642M451.5 637V642M452.5 637V642M453.5 633V642M454.5 633V642M455.5 637V642M456.5 633V642M457.5 637V642M458.5 633V646M459.5 637V642M460.5 633V642M461.5 637V642M462.5 637V642M463.5 633V646M464.5 637V642M465.5 637V642M466.5 637V642M467.5 637V642M468.5 633V646M469.5 637V642M470.5 637V642M471.5 637V642M472.5 637V642M473.5 633V642M474.5 637V642M475.5 633V642M476.5 633V642M477.5 637V642M478.5 637V646M479.5 633V642M480.5 633V642M481.5 637V642M482.5 633V642M483.5 637V642M484.5 637V642M485.5 637V646M486.5 633V646M487.5 637V646M488.5 633V642M489.5 637V642M490.5 637V642M491.5 637V642M492.5 637V642M493.5 633V642M494.5 637V642M495.5 637V642M496.5 637V642M497.5 637V642M498.5 633V642M499.5 637V642M500.5 633V646M501.5 637V642M502.5 637V642M503.5 637V642M504.5 637V642M505.5 633V642M506.5 637V642M507.5 637V642M508.5 633V642M509.5 637V646M510.5 637V642M511.5 633V642M512.5 637V642M513.5 637V642M514.5 633V646M515.5 637V642M516.5 637V642M517.5 633V642M518.5 637V646M519.5 633V642M520.5 637V642M521.5 633V646M522.5 637V642M523.5 633V642M524.5 637V642M525.5 633V642M526.5 637V642M527.5 637V642M528.5 637V642M529.5 633V642M530.5 633V642M531.5 637V642M532.5 637V642M533.5 637V642M534.5 633V642M535.5 637V642M536.5 637V642M537.5 633V642M538.5 637V642M539.5 637V642M540.5 637V642M541.5 637V646M542.5 637V646M543.5 637V642M544.5 637V642M545.5 637V642M546.5 637V642M547.5 637V642M548.5 633V642M549.5 637V642M550.5 637V642M551.5 633V642M552.5 637V642M553.5 637V642M554.5 633V642M555.5 637V642M556.5 637V646M557.5 633V646M558.5 637V642M559.5 633V642M560.5 637V642M561.5 637V642M562.5 637V642M563.5 633V642M564.5 637V642M565.5 637V642M566.5 633V642M567.5 637V642M568.5 637V642M569.5 637V642M570.5 637V642M571.5 637V642M572.5 637V642M573.5 637V642M574.5 637V642M575.5 637V642M576.5 637V642M577.5 637V642M578.5 637V642M579.5 637V642M580.5 633V642M581.5 637V642M582.5 637V642M583.5 637V642M584.5 633V642M585.5 633V642M586.5 637V642M587.5 637V642M588.5 637V642M589.5 633V642M590.5 637V642M591.5 633V642M592.5 633V646M593.5 637V642M594.5 637V642M595.5 637V646M596.5 637V642M597.5 637V646M598.5 637V646M599.5 637V642M600.5 637V642M601.5 637V642M602.5 637V646M603.5 637V646M604.5 637V646M605.5 637V642M606.5 633V646M607.5 637V642M608.5 637V642M609.5 633V642M610.5 637V642M611.5 637V642M612.5 637V642M613.5 633V642M614.5 637V642M615.5 633V642M616.5 633V642M617.5 633V642M618.5 633V642M619.5 633V642M620.5 637V642M621.5 633V642M622.5 637V642M623.5 637V642M624.5 637V642M625.5 637V642M626.5 637V642M627.5 637V642M628.5 633V646M629.5 633V642M630.5 637V642M631.5 637V642M632.5 637V642M633.5 637V646M634.5 637V646M635.5 637V646M636.5 633V642M637.5 637V642M638.5 637V642M639.5 633V642M640.5 637V642M641.5 633V642M642.5 637V642M643.5 637V642M644.5 637V642M645.5 633V642M646.5 637V642M647.5 637V642M648.5 633V642M649.5 637V642M650.5 637V642M651.5 637V646M652.5 637V642M653.5 633V642M654.5 637V642M655.5 633V642M656.5 637V642M657.5 637V646M658.5 633V642M659.5 637V642M660.5 633V642M661.5 637V642M662.5 637V642M663.5 637V642M664.5 633V642M665.5 637V642M666.5 633V642M667.5 633V642M668.5 637V642M669.5 637V642M670.5 633V646M671.5 637V646M672.5 637V642M673.5 637V642M674.5 637V642M675.5 633V646M676.5 637V642M677.5 633V642M678.5 633V642M679.5 637V642M680.5 633V642M681.5 637V642M682.5 633V642M683.5 637V642M684.5 637V642M685.5 637V642M686.5 633V642M687.5 637V642M688.5 637V642M689.5 637V642M690.5 637V642M691.5 633V642M692.5 637V642M693.5 637V646M694.5 637V642M695.5 633V642M696.5 637V642M697.5 633V646M698.5 637V642M699.5 633V642M700.5 637V646M701.5 637V642M702.5 637V642M703.5 637V642M704.5 637V646M705.5 637V642M706.5 637V642M707.5 637V642M708.5 637V646M709.5 637V642M710.5 633V642M711.5 637V642M712.5 637V642M713.5 637V646M714.5 637V642M715.5 637V642M716.5 637V642M717.5 637V642M718.5 633V642M719.5 637V642M720.5 637V642M721.5 637V642M722.5 637V642M723.5 637V642M724.5 633V642M725.5 637V646M726.5 637V642M727.5 637V646M728.5 637V642M729.5 633V642M730.5 637V642M731.5 637V642M732.5 633V642M733.5 637V642M734.5 633V642M735.5 633V642M736.5 633V642M737.5 633V642M738.5 637V642M739.5 637V642M740.5 637V642M741.5 637V642M742.5 637V642M743.5 637V642M744.5 637V642M745.5 637V642M746.5 637V642M747.5 633V642M748.5 633V642M749.5 633V642M750.5 637V642M751.5 637V642M752.5 633V642M753.5 633V642M754.5 637V642M755.5 637V642M756.5 637V642M757.5 637V642M758.5 637V642M759.5 637V642M760.5 637V642M761.5 637V642M762.5 637V642M763.5 637V642M764.5 633V642M765.5 637V642M766.5 633V642M767.5 637V642M768.5 637V642M769.5 637V642M770.5 637V642M771.5 637V642M772.5 637V642M773.5 637V646M774.5 637V642M775.5 637V642M776.5 633V646M777.5 637V642M778.5 637V642M779.5 637V642M780.5 637V642M781.5 637V642M782.5 637V642M783.5 637V642M784.5 637V642M785.5 637V646M786.5 637V646M787.5 633V642M788.5 637V642M789.5 637V642M790.5 633V642M791.5 637V642M792.5 637V642M793.5 633V642M794.5 637V642M795.5 633V646M796.5 637V646M797.5 637V642M798.5 637V642M799.5 637V646M800.5 637V642M801.5 633V646M802.5 637V642M803.5 633V642M804.5 633V646M805.5 637V646M806.5 637V646M807.5 637V642M808.5 633V642M809.5 633V642M810.5 637V646M811.5 633V642M812.5 633V642M813.5 633V642M814.5 637V642M815.5 633V642M816.5 637V642M817.5 637V642M818.5 637V642M819.5 637V642M820.5 637V646M821.5 637V642M822.5 633V642M823.5 637V642M824.5 637V646M825.5 637V646M826.5 637V642M827.5 637V642M828.5 637V646M829.5 633V646M830.5 633V642M831.5 637V642M832.5 637V646M833.5 633V642M834.5 637V642M835.5 633V642M836.5 637V642M837.5 637V642M838.5 637V642M839.5 637V642M840.5 637V642M841.5 637V642M842.5 637V642M843.5 637V642M844.5 637V642M845.5 637V642M846.5 637V642M847.5 637V642M848.5 637V642M849.5 637V642M850.5 637V642M851.5 637V642M852.5 637V646M853.5 637V646M854.5 637V642M855.5 633V642M856.5 633V642M857.5 637V642M858.5 633V642M859.5 637V646M860.5 633V642M861.5 633V642M862.5 633V642M863.5 633V642M864.5 637V642M865.5 637V642M866.5 637V642M867.5 637V642M868.5 633V642M869.5 637V642M870.5 637V642M871.5 633V646M872.5 637V642M873.5 637V642M874.5 637V642M875.5 637V646M876.5 633V642M877.5 637V642M878.5 637V642M879.5 637V642M880.5 633V642M881.5 637V642M882.5 637V642M883.5 633V642M884.5 637V642M885.5 637V642M886.5 637V642M887.5 633V646M888.5 637V646M889.5 637V642M890.5 637V642M891.5 637V642M892.5 637V646M893.5 637V646M894.5 637V642M895.5 637V642M896.5 637V642M897.5 633V642M898.5 637V642M899.5 637V642M900.5 637V642M901.5 637V642M902.5 637V642M903.5 633V642M904.5 637V642M905.5 637V646M906.5 633V642M907.5 633V646M908.5 633V642M909.5 637V642M910.5 637V642M911.5 637V642M912.5 637V642M913.5 637V646M914.5 633V642M915.5 637V642M916.5 637V642M917.5 637V646M918.5 637V642M919.5 633V642M920.5 637V642M921.5 637V642M922.5 637V642M923.5 637V642M924.5 637V642M925.5 637V646M926.5 633V642M927.5 637V646M928.5 633V642M929.5 637V642M930.5 637V646M931.5 637V642M932.5 633V642M933.5 633V642M934.5 633V642M935.5 637V642M936.5 633V642M937.5 633V642M938.5 637V642M939.5 637V642M940.5 637V642M941.5 637V642M942.5 633V642M943.5 637V642M944.5 633V646M945.5 637V642M946.5 637V646M947.5 637V642M948.5 637V642M949.5 637V642M950.5 637V642M951.5 637V646M952.5 637V642M953.5 637V642M954.5 637V642M955.5 633V642M956.5 637V642M957.5 637V642M958.5 637V642M959.5 637V642M960.5 637V646M961.5 637V646M962.5 637V646M963.5 633V642M964.5 633V642M965.5 637V642M966.5 637V642M967.5 637V642M968.5 637V642M969.5 637V642M970.5 637V642M971.5 637V642M972.5 633V642M973.5 637V642M974.5 637V642M975.5 633V642M976.5 637V642M977.5 637V646M978.5 633V642M979.5 637V646M980.5 637V642M981.5 637V646M982.5 637V642M983.5 637V642M984.5 637V642M985.5 637V642M986.5 637V642M987.5 637V642M988.5 633V642M989.5 637V646M990.5 637V646M991.5 633V642M992.5 633V642M993.5 637V646M994.5 637V646M995.5 633V646M996.5 637V642M997.5 637V642M998.5 637V642M999.5 637V642M1000.5 637V642M1001.5 637V642M1002.5 637V642M1003.5 633V642M1004.5 637V642M1005.5 637V642M1006.5 633V642M1007.5 633V642M1008.5 637V642M1009.5 637V642M1010.5 633V642M1011.5 633V642M1012.5 637V642M1013.5 633V642M1014.5 637V642M1015.5 637V642M1016.5 633V642M1017.5 637V642M1018.5 637V642M1019.5 637V642M1020.5 637V642M1021.5 633V642M1022.5 637V642M1023.5 633V642M1024.5 633V646M1025.5 637V646M1026.5 637V642M1027.5 637V642M1028.5 633V642M1029.5 637V646M1030.5 637V642M1031.5 637V642M1032.5 637V642M1033.5 637V642M1034.5 637V642M1035.5 633V642M1036.5 637V642M1037.5 633V642M1038.5 637V642M1039.5 637V642M1040.5 637V642M1041.5 637V642M1042.5 637V642M1043.5 637V646M1044.5 637V642M1045.5 637V642M1046.5 637V642M1047.5 637V642M1048.5 637V642M1049.5 637V642M1050.5 637V642M1051.5 633V646M1052.5 637V642M1053.5 637V642M1054.5 637V646M1055.5 637V642M1056.5 637V642M1057.5 633V646M1058.5 637V642M1059.5 637V642M1060.5 637V642M1061.5 637V646M1062.5 633V642M1063.5 637V642M1064.5 637V642M1065.5 637V646M1066.5 637V642M1067.5 633V646M1068.5 633V642M1069.5 637V642M1070.5 633V642M1071.5 637V642M1072.5 637V642M1073.5 637V642M1074.5 637V642M1075.5 633V642M1076.5 637V642M1077.5 633V646M1078.5 637V642M1079.5 637V642M1080.5 637V646M1081.5 637V642M1082.5 633V642M1083.5 637V642M1084.5 633V642M1085.5 637V642M1086.5 637V642M1087.5 633V642M1088.5 637V642M1089.5 637V642M1090.5 633V646M1091.5 637V642M1092.5 633V642M1093.5 637V642M1094.5 637V642M1095.5 633V642M1096.5 637V642M1097.5 637V642M1098.5 637V642M1099.5 633V642M1100.5 637V646M1101.5 633V642M1102.5 637V642M1103.5 633V642M1104.5 637V642M1105.5 637V642M1106.5 633V642M1107.5 637V642M1108.5 637V642M1109.5 637V642M1110.5 637V642M1111.5 633V642M1112.5 637V642M1113.5 637V646M1114.5 637V642M1115.5 637V642M1116.5 637V642M1117.5 637V642M1118.5 633V642M1119.5 637V646M1120.5 637V646M1121.5 637V642M1122.5 637V642M1123.5 637V642M1124.5 637V642M1125.5 633V642M1126.5 637V642M1127.5 637V646M1128.5 637V642M1129.5 637V642M1130.5 633V646M1131.5 637V642M1132.5 637V642M1133.5 637V642M1134.5 637V646M1135.5 637V642M1136.5 637V642M1137.5 637V642M1138.5 637V642M1139.5 637V642M1140.5 633V642M1141.5 637V642M1142.5 637V642M1143.5 633V642M1144.5 633V646M1145.5 637V642M1146.5 633V642M1147.5 637V642M1148.5 637V642M1149.5 637V642M1150.5 637V642M1151.5 637V642M1152.5 633V642M1153.5 637V642M1154.5 633V642M1155.5 637V642M1156.5 637V642M1157.5 637V646M1158.5 637V642M1159.5 633V646M1160.5 633V642M1161.5 637V646M1162.5 633V642M1163.5 637V642M1164.5 633V646M1165.5 637V642M1166.5 633V642M1167.5 633V642M1168.5 637V642M1169.5 637V642M1170.5 637V642M1171.5 637V646M1172.5 637V642M1173.5 637V642M1174.5 637V646M1175.5 637V642M1176.5 633V642M1177.5 637V642M1178.5 633V642M1179.5 633V642M1180.5 633V642M1181.5 633V642M1182.5 637V642M1183.5 637V642M1184.5 637V642M1185.5 637V642M1186.5 637V642M1187.5 637V642M1188.5 637V642M1189.5 637V646M1190.5 637V646M1191.5 637V642M1192.5 633V646M1193.5 637V646M1194.5 637V642M1195.5 637V642M1196.5 637V642M1197.5 633V646M1198.5 637V646M1199.5 637V642M1200.5 637V642M1201.5 637V642M1202.5 637V642M1203.5 637V642M1204.5 637V642M1205.5 637V642M1206.5 637V642M1207.5 633V642M1208.5 637V642M1209.5 637V642M1210.5 637V642M1211.5 633V642M1212.5 637V646M1213.5 637V642M1214.5 637V642M1215.5 633V642M1216.5 637V642M1217.5 637V642M1218.5 637V646M1219.5 633V642M1220.5 637V642M1221.5 637V642M1222.5 637V642M1223.5 633V642M1224.5 637V642M1225.5 633V642M1226.5 637V642M1227.5 637V642M1228.5 637V642M1229.5 633V646M1230.5 637V642M1231.5 637V642M1232.5 637V642M1233.5 637V642M1234.5 637V642M1235.5 637V642M1236.5 637V642M1237.5 637V642M1238.5 637V642M1239.5 633V646M1240.5 637V642M1241.5 637V642M1242.5 633V642M1243.5 637V642M1244.5 637V642M1245.5 637V642M1246.5 633V642M1247.5 633V642M1248.5 637V646M1249.5 637V646M1250.5 637V642M1251.5 637V642M1252.5 637V642M1253.5 637V642M1254.5 637V642M1255.5 637V642M1256.5 637V642M1257.5 637V642M1258.5 633V642M1259.5 637V642M1260.5 633V642M1261.5 633V642M1262.5 637V642M1263.5 637V642M1264.5 637V642M1265.5 637V646M1266.5 637V642M1267.5 637V642M1268.5 637V642M1269.5 633V642M1270.5 637V642M1271.5 637V642M1272.5 633V642M1273.5 637V642M1274.5 637V642M1275.5 633V642M1276.5 637V642M1277.5 637V642M1278.5 637V642M1279.5 633V642M1280.5 637V642M1281.5 637V642M1282.5 637V642M1283.5 637V642M1284.5 637V646M1285.5 637V642M1286.5 637V642M1287.5 637V642M1288.5 637V646M1289.5 637V642M1290.5 637V642M1291.5 637V642M1292.5 637V642M1293.5 637V646M1294.5 637V646M1295.5 637V642M1296.5 637V642M1297.5 633V642M1298.5 637V642M1299.5 633V642M1300.5 633V642M1301.5 637V646M1302.5 637V642M1303.5 637V646M1304.5 637V646M1305.5 633V642M1306.5 637V642M1307.5 637V642M1308.5 637V642M1309.5 633V642M1310.5 637V642M1311.5 633V642M1312.5 637V642M1313.5 637V642M1314.5 633V642M1315.5 637V642M1316.5 637V642M1317.5 633V642M1318.5 637V642M1319.5 637V646M1320.5 637V642M1321.5 633V646M1322.5 633V646M1323.5 637V642M1324.5 637V646M1325.5 637V642M1326.5 637V642M1327.5 637V642M1328.5 633V646M1329.5 637V646M1330.5 637V642M1331.5 637V642M1332.5 637V642M1333.5 637V642M1334.5 637V642M1335.5 633V646M1336.5 637V642M1337.5 633V642M1338.5 637V642M1339.5 637V646M1340.5 633V642M1341.5 637V642M1342.5 633V642M1343.5 637V642M1344.5 637V646M1345.5 633V642M1346.5 633V642M1347.5 637V642M1348.5 637V642M1349.5 637V642M1350.5 633V642M1351.5 637V642M1352.5 637V642M1353.5 637V646M1354.5 637V642M1355.5 637V642M1356.5 637V642M1357.5 633V642M1358.5 633V642M1359.5 633V642M1360.5 637V642M1361.5 633V642M1362.5 637V642M1363.5 637V642M1364.5 637V642M1365.5 637V642M1366.5 637V642M1367.5 637V642M1368.5 633V642M1369.5 637V642M1370.5 637V642M1371.5 633V642M1372.5 637V642M1373.5 637V642M1374.5 633V642M1375.5 637V642M1376.5 633V646M1377.5 637V642M1378.5 637V642M1379.5 637V642M1380.5 633V642M1381.5 637V642M1382.5 637V642M1383.5 637V642M1384.5 637V642M1385.5 637V642M1386.5 633V642M1387.5 637V642M1388.5 637V642M1389.5 637V642M1390.5 637V642M1391.5 637V642M1392.5 633V642M1393.5 637V642M1394.5 637V642M1395.5 633V642M1396.5 637V642M1397.5 637V646M1398.5 637V642M1399.5 633V642M1400.5 633V642M1401.5 637V642M1402.5 637V646M1403.5 637V646M1404.5 637V642M1405.5 637V642M1406.5 633V646M1407.5 637V642M1408.5 637V642M1409.5 637V642M1410.5 633V642M1411.5 637V642M1412.5 633V642M1413.5 637V642M1414.5 637V642M1415.5 637V642M1416.5 633V646M1417.5 633V642M1418.5 637V642M1419.5 637V642M1420.5 637V642M1421.5 637V642M1422.5 633V642M1423.5 633V642M1424.5 637V642M1425.5 633V642M1426.5 637V642M1427.5 633V646M1428.5 637V646M1429.5 633V642M1430.5 637V642M1431.5 633V646M1432.5 637V646M1433.5 637V642M1434.5 633V642M1435.5 637V642M1436.5 637V642M1437.5 637V642M1438.5 633V646M1439.5 637V642M1440.5 637V642M1441.5 637V642M1442.5 633V642M1443.5 637V642M1444.5 637V642M1445.5 637V642M1446.5 637V642M1447.5 637V642M1448.5 633V642M1449.5 637V642M1450.5 637V642M1451.5 637V642M1452.5 637V642M1453.5 637V642M1454.5 633V642M1455.5 637V642M1456.5 633V642M1457.5 637V642M1458.5 637V642M1459.5 633V642M1460.5 633V642M1461.5 637V642M1462.5 633V642M1463.5 637V646M1464.5 637V642M1465.5 633V646M1466.5 637V642M1467.5 637V642M1468.5 633V642M1469.5 637V642M1470.5 637V642M1471.5 633V642M1472.5 637V642M1473.5 637V642M1474.5 637V642M1475.5 637V642M1476.5 637V642M1477.5 633V642M1478.5 637V642M1479.5 633V642M1480.5 637V642M1481.5 633V642M1482.5 637V642M1483.5 637V646M1484.5 633V642M1485.5 637V642M1486.5 637V642M1487.5 637V642M1488.5 637V646M1489.5 637V642M1490.5 637V642M1491.5 633V642M1492.5 637V642M1493.5 637V642M1494.5 637V642M1495.5 637V642M1496.5 637V642M1497.5 633V642M1498.5 633V642M1499.5 633V642M1500.5 637V646M1501.5 633V642M1502.5 637V642M1503.5 633V642M1504.5 637V642M1505.5 637V642M1506.5 633V642M1507.5 637V646M1508.5 637V642M1509.5 633V642M1510.5 637V646M1511.5 633V642M1512.5 637V642M1513.5 633V642M1514.5 637V642M1515.5 633V642M1516.5 633V642M1517.5 637V642M1518.5 637V642M1519.5 637V646M1520.5 633V642M1521.5 637V642M1522.5 633V642M1523.5 637V642M1524.5 637V642M1525.5 633V642M1526.5 633V642M1527.5 637V642M1528.5 637V642M1529.5 633V642M1530.5 637V642M1531.5 633V646M1532.5 637V642M1533.5 637V642M1534.5 637V642M1535.5 637V646M1536.5 637V642M1537.5 633V642M1538.5 637V642M1539.5 637V642M1540.5 637V642M1541.5 633V642M1542.5 637V642M1543.5 637V642M1544.5 637V642M1545.5 637V642M1546.5 637V642M1547.5 637V642M1548.5 637V642M1549.5 633V642M1550.5 637V642M1551.5 637V642M1552.5 637V642M1553.5 637V642M1554.5 637V646M1555.5 637V642M1556.5 637V642M1557.5 637V642M1558.5 637V642M1559.5 633V642M1560.5 633V642M1561.5 637V642M1562.5 637V642M1563.5 633V642M1564.5 637V642M1565.5 633V642M1566.5 637V642M1567.5 637V642M1568.5 637V642M1569.5 633V642M1570.5 633V646M1571.5 637V646M1572.5 637V642M1573.5 633V642M1574.5 637V642M1575.5 637V642M1576.5 637V642M1577.5 637V642M1578.5 637V642M1579.5 637V642M1580.5 637V642M1581.5 637V642M1582.5 633V642M1583.5 633V642M1584.5 637V646M1585.5 637V646M1586.5 637V642M1587.5 637V642M1588.5 637V646M1589.5 637V642M1590.5 637V646M1591.5 637V642M1592.5 637V642M1593.5 637V642M1594.5 637V646M1595.5 633V642M1596.5 637V642M1597.5 637V642M1598.5 633V642M1599.5 637V642M1600.5 637V642M1601.5 637V642M1602.5 637V642M1603.5 633V642M1604.5 637V642M1605.5 637V646M1606.5 637V646M1607.5 637V646M1608.5 633V642M1609.5 637V642M1610.5 633V642M1611.5 633V642M1612.5 637V642M1613.5 637V642M1614.5 633V642M1615.5 637V642M1616.5 637V642M1617.5 633V646M1618.5 637V642M1619.5 637V646M1620.5 637V642M1621.5 637V642M1622.5 637V642M1623.5 637V642M1624.5 637V642M1625.5 637V646M1626.5 637V642M1627.5 633V646M1628.5 637V642M1629.5 637V642M1630.5 633V642M1631.5 637V642M1632.5 637V642M1633.5 633V642M1634.5 637V642M1635.5 637V642M1636.5 637V642M1637.5 633V642M1638.5 637V642M1639.5 637V642M1640.5 637V642M1641.5 637V642M1642.5 633V642M1643.5 637V642M1644.5 633V642M1645.5 622V642M1646.5 637V668M1647.5 615V646M1648.5 633V668M1649.5 611V642M1650.5 637V657M1651.5 633V653M1652.5 637V653M1653.5 633V650M1654.5 637V649M1655.5 630V642M1656.5 633V642M1657.5 633V642M1658.5 633V642M1659.5 633V642M1660.5 633V642M1661.5 633V646M1662.5 633V642M1663.5 637V642M1664.5 637V642M1665.5 633V642M1666.5 633V642M1667.5 637V642M1668.5 637V642M1669.5 637V642M1670.5 633V646M1671.5 633V646M1672.5 633V642M1673.5 633V642M1674.5 637V642M1675.5 637V646M1676.5 633V642M1677.5 637V642M1678.5 633V642M1679.5 637V646M1680.5 637V642M1681.5 637V642M1682.5 633V646M1683.5 637V642M1684.5 637V642M1685.5 637V642M1686.5 637V642M1687.5 633V642M1688.5 637V646M1689.5 637V642M1690.5 637V646M1691.5 633V642M1692.5 637V642M1693.5 637V642M1694.5 637V642M1695.5 633V642M1696.5 633V642M1697.5 637V642M1698.5 637V642M1699.5 637V646M1700.5 637V646M1701.5 637V642M1702.5 637V642M1703.5 633V642M1704.5 637V642M1705.5 637V642M1706.5 637V642M1707.5 637V642M1708.5 637V642M1709.5 637V642M1710.5 637V642M1711.5 637V642M1712.5 637V646M1713.5 637V642M1714.5 633V642M1715.5 637V642M1716.5 637V642M1717.5 637V646M1718.5 637V642M1719.5 637V642M1720.5 637V642M1721.5 637V646M1722.5 633V642M1723.5 637V642M1724.5 637V642M1725.5 637V642M1726.5 637V642M1727.5 637V642M1728.5 637V642M1729.5 637V642M1730.5 637V642M1731.5 637V642M1732.5 637V642M1733.5 637V642M1734.5 637V642M1735.5 633V642M1736.5 637V646M1737.5 637V646M1738.5 637V642M1739.5 637V642M1740.5 637V642M1741.5 637V642M1742.5 637V642M1743.5 637V642M1744.5 637V642M1745.5 633V642M1746.5 637V642M1747.5 637V642M1748.5 637V642M1749.5 637V642M1750.5 637V642"/>
<path stroke="#f8f000" d="M3.5 353V365M4.5 353V362M5.5 353V362M6.5 350V365M7.5 353V362M8.5 357V369M9.5 357V362M10.5 353V365M11.5 357V362M12.5 353V365M13.5 353V365M14.5 350V365M15.5 353V365M16.5 353V365M17.5 353V362M18.5 353V365M19.5 353V362M20.5 353V365M21.5 353V362M22.5 353V365M23.5 353V362M24.5 353V365M25.5 353V362M26.5 353V365M27.5 353V365M28.5 353V362M29.5 353V362M30.5 353V365M31.5 353V365M32.5 353V365M33.5 353V365M34.5 353V365M35.5 353V365M36.5 353V365M37.5 353V362M38.5 353V365M39.5 353V365M40.5 353V365M41.5 353V362M42.5 353V365M43.5 353V362M44.5 353V362M45.5 353V362M46.5 353V365M47.5 357V365M48.5 353V365M49.5 353V362M50.5 357V362M51.5 357V366M52.5 357V362M53.5 357V365M54.5 353V365M55.5 353V365M56.5 353V365M57.5 353V362M58.5 353V362M59.5 353V362M60.5 353V365M61.5 353V362M62.5 353V365M63.5 357V362M64.5 353V365M65.5 353V365M66.5 353V365M67.5 353V362M68.5 357V365M69.5 357V365M70.5 353V362M71.5 350V362M72.5 353V365M73.5 353V362M74.5 353V362M75.5 353V365M76.5 353V362M77.5 353V365M78.5 353V365M79.5 353V369M80.5 357V362M81.5 353V362M82.5 353V365M83.5 349V365M84.5 353V362M85.5 353V365M86.5 353V365M87.5 353V365M88.5 353V365M89.5 353V362M90.5 350V365M91.5 353V362M92.5 353V365M93.5 353V362M94.5 353V362M95.5 357V365M96.5 357V362M97.5 353V362M98.5 353V362M99.5 353V362M100.5 353V362M101.5 353V365M102.5 353V362M103.5 353V365M104.5 353V365M105.5 353V362M106.5 353V365M107.5 353V365M108.5 353V365M109.5 353V362M110.5 353V365M111.5 353V362M112.5 353V362M113.5 353V362M114.5 353V365M115.5 353V362M116.5 353V365M117.5 353V365M118.5 353V365M119.5 353V362M120.5 353V362M121.5 353V362M122.5 357V365M123.5 357V362M124.5 349V365M125.5 353V365M126.5 353V365M127.5 353V362M128.5 353V362M129.5 353V365M130.5 353V368M131.5 353V362M132.5 353V365M133.5 353V362M134.5 353V365M135.5 353V365M136.5 353V365M137.5 349V368M138.5 353V362M139.5 353V362M140.5 357V362M141.5 357V365M142.5 357V365M143.5 357V365M144.5 357V365M145.5 353V362M146.5 353V365M147.5 353V362M148.5 353V362M149.5 353V362M150.5 357V365M151.5 353V365M152.5 353V365M153.5 353V362M154.5 353V365M155.5 353V365M156.5 353V365M157.5 357V362M158.5 353V365M159.5 353V366M160.5 353V365M161.5 353V365M162.5 353V362M163.5 353V362M164.5 353V365M165.5 353V365M166.5 353V365M167.5 353V365M168.5 353V365M169.5 349V365M170.5 353V362M171.5 353V362M172.5 353V362M173.5 353V365M174.5 339V363M175.5 310V351M176.5 297V322M177.5 269V310M178.5 266V282M179.5 246V282M180.5 232V258M181.5 217V237M182.5 205V230M183.5 197V218M184.5 191V210M185.5 184V203M186.5 179V194M187.5 177V192M188.5 174V190M189.5 167V184M190.5 167V184M191.5 165V179M192.5 163V177M193.5 161V175M194.5 163V170M195.5 157V169M196.5 159V167M197.5 154V168M198.5 157V164M199.5 153V163M200.5 152V166M201.5 152V165M202.5 152V162M203.5 151V165M204.5 151V164M205.5 151V164M206.5 151V164M207.5 151V161M208.5 151V164M209.5 155V164M210.5 151V164M211.5 151V164M212.5 151V164M213.5 151V168M214.5 151V164M215.5 151V160M216.5 151V163M217.5 151V163M218.5 151V164M219.5 151V163M220.5 151V163M221.5 151V163M222.5 151V160M223.5 151V160M224.5 151V163M225.5 151V163M226.5 151V160M227.5 151V163M228.5 151V163M229.5 151V160M230.5 151V163M231.5 151V163M232.5 151V163M233.5 151V163M234.5 151V163M235.5 151V160M236.5 151V163M237.5 151V163M238.5 155V160M239.5 151V163M240.5 151V160M241.5 147V160M242.5 151V160M243.5 155V160M244.5 155V163M245.5 151V160M246.5 151V160M247.5 151V160M248.5 155V163M249.5 155V163M250.5 155V160M251.5 151V160M252.5 151V160M253.5 155V160M254.5 151V160M255.5 151V163M256.5 151V160M257.5 151V160M258.5 155V160M259.5 151V160M260.5 151V163M261.5 151V163M262.5 151V163M263.5 151V160M264.5 151V163M265.5 151V163M266.5 151V166M267.5 151V160M268.5 151V160M269.5 151V163M270.5 155V163M271.5 155V160M272.5 155V160M273.5 151V163M274.5 151V163M275.5 151V163M276.5 151V163M277.5 151V163M278.5 151V160M279.5 151V163M280.5 151V163M281.5 151V163M282.5 147V163M283.5 151V163M284.5 147V160M285.5 151V163M286.5 151V163M287.5 151V163M288.5 151V167M289.5 151V160M290.5 151V160M291.5 151V160M292.5 151V160M293.5 151V160M294.5 151V163M295.5 147V163M296.5 151V163M297.5 151V163M298.5 151V166M299.5 151V160M300.5 151V160M301.5 155V160M302.5 151V160M303.5 155V163M304.5 151V160M305.5 151V163M306.5 151V160M307.5 155V163M308.5 151V160M309.5 155V163M310.5 155V160M311.5 155V160M312.5 151V160M313.5 151V160M314.5 151V163M315.5 151V160M316.5 151V160M317.5 151V163M318.5 151V163M319.5 151V160M320.5 148V160M321.5 151V163M322.5 151V163M323.5 151V163M324.5 151V163M325.5 151V160M326.5 151V163M327.5 151V163M328.5 151V160M329.5 151V163M330.5 151V160M331.5 151V163M332.5 151V160M333.5 151V163M334.5 151V163M335.5 151V160M336.5 151V163M337.5 151V160M338.5 151V160M339.5 151V160M340.5 155V163M341.5 151V160M342.5 151V163M343.5 151V160M344.5 151V160M345.5 151V160M346.5 147V163M347.5 151V163M348.5 151V163M349.5 151V160M350.5 155V160M351.5 148V163M352.5 151V164M353.5 155V166M354.5 155V165M355.5 157V169M356.5 159V171M357.5 161V173M358.5 165V174M359.5 165V177M360.5 169V178M361.5 170V181M362.5 173V185M363.5 175V187M364.5 178V189M365.5 182V194M366.5 185V196M367.5 186V197M368.5 190V201M369.5 191V203M370.5 189V204M371.5 197V208M372.5 198V208M373.5 201V211M374.5 202V213M375.5 205V215M376.5 208V217M377.5 208V220M378.5 210V221M379.5 212V224M380.5 216V226M381.5 218V228M382.5 219V228M383.5 220V230M384.5 223V234M385.5 224V234M386.5 227V236M387.5 228V240M388.5 230V240M389.5 233V242M390.5 234V246M391.5 236V247M392.5 237V248M393.5 239V249M394.5 241V252M395.5 244V252M396.5 244V255M397.5 247V256M398.5 248V256M399.5 248V259M400.5 249V261M401.5 251V261M402.5 254V263M403.5 253V263M404.5 256V266M405.5 256V266M406.5 258V267M407.5 260V270M408.5 262V270M409.5 261V271M410.5 263V272M411.5 264V274M412.5 265V276M413.5 266V276M414.5 268V279M415.5 270V280M416.5 270V280M417.5 271V283M418.5 274V282M419.5 275V285M420.5 275V285M421.5 278V287M422.5 279V286M423.5 278V289M424.5 280V288M425.5 280V289M426.5 282V292M427.5 282V291M428.5 283V293M429.5 283V293M430.5 284V295M431.5 287V295M432.5 288V297M433.5 287V297M434.5 288V301M435.5 290V300M436.5 291V299M437.5 292V301M438.5 291V301M439.5 294V301M440.5 291V305M441.5 289V305M442.5 292V309M443.5 293V307M444.5 294V307M445.5 295V305M446.5 295V309M447.5 296V310M448.5 297V310M449.5 297V311M450.5 298V312M451.5 303V310M452.5 300V313M453.5 300V314M454.5 301V312M455.5 306V312M456.5 302V313M457.5 303V317M458.5 304V317M459.5 304V318M460.5 305V315M461.5 306V316M462.5 306V320M463.5 311V320M464.5 311V321M465.5 312V322M466.5 313V322M467.5 309V323M468.5 310V324M469.5 311V324M470.5 315V322M471.5 312V325M472.5 312V323M473.5 317V327M474.5 318V327M475.5 314V328M476.5 315V329M477.5 316V329M478.5 316V330M479.5 317V330M480.5 317V328M481.5 318V329M482.5 319V332M483.5 319V330M484.5 320V333M485.5 320V333M486.5 320V331M487.5 321V334M488.5 325V334M489.5 321V332M490.5 322V332M491.5 322V339M492.5 322V333M493.5 323V333M494.5 323V333M495.5 323V337M496.5 324V334M497.5 324V337M498.5 324V335M499.5 325V335M500.5 325V335M501.5 325V336M502.5 326V339M503.5 326V336M504.5 326V344M505.5 331V340M506.5 331V340M507.5 327V341M508.5 328V344M509.5 328V341M510.5 328V338M511.5 324V342M512.5 329V342M513.5 329V342M514.5 329V342M515.5 329V340M516.5 330V343M517.5 330V343M518.5 330V343M519.5 330V344M520.5 331V344M521.5 331V341M522.5 331V345M523.5 332V346M524.5 332V342M525.5 332V345M526.5 332V346M527.5 333V346M528.5 333V346M529.5 333V346M530.5 337V347M531.5 338V347M532.5 334V347M533.5 334V347M534.5 334V347M535.5 334V348M536.5 335V345M537.5 335V345M538.5 335V348M539.5 335V348M540.5 335V349M541.5 340V349M542.5 340V346M543.5 336V346M544.5 336V346M545.5 336V350M546.5 337V350M547.5 337V350M548.5 337V350M549.5 337V350M550.5 337V351M551.5 338V351M552.5 338V355M553.5 338V351M554.5 338V348M555.5 338V352M556.5 339V349M557.5 339V349M558.5 339V349M559.5 339V352M560.5 339V352M561.5 339V350M562.5 340V353M563.5 340V353M564.5 344V350M565.5 340V353M566.5 336V350M567.5 340V354M568.5 341V354M569.5 341V351M570.5 341V351M571.5 341V354M572.5 341V354M573.5 341V355M574.5 346V355M575.5 338V355M576.5 342V355M577.5 342V355M578.5 342V352M579.5 342V353M580.5 343V356M581.5 343V356M582.5 343V356M583.5 343V356M584.5 343V356M585.5 344V357M586.5 344V358M587.5 344V354M588.5 344V357M589.5 344V357M590.5 344V357M591.5 344V354M592.5 348V357M593.5 348V355M594.5 345V358M595.5 345V358M596.5 345V358M597.5 345V355M598.5 345V358M599.5 345V358M600.5 345V358M601.5 345V359M602.5 346V356M603.5 346V359M604.5 346V356M605.5 346V359M606.5 346V359M607.5 346V356M608.5 346V359M609.5 343V357M610.5 347V360M611.5 351V357M612.5 351V357M613.5 347V360M614.5 351V357M615.5 344V360M616.5 347V360M617.5 347V357M618.5 347V362M619.5 348V358M620.5 345V358M621.5 348V361M622.5 352V358M623.5 352V361M624.5 352V358M625.5 352V361M626.5 352V358M627.5 352V361M628.5 352V358M629.5 352V361M630.5 348V361M631.5 348V359M632.5 349V362M633.5 349V362M634.5 349V359M635.5 349V362M636.5 353V359M637.5 349V362M638.5 349V359M639.5 349V362M640.5 349V362M641.5 353V362M642.5 349V362M643.5 349V363M644.5 350V360M645.5 350V360M646.5 350V363M647.5 350V360M648.5 350V363M649.5 350V360M650.5 346V363M651.5 350V360M652.5 346V360M653.5 350V363M654.5 350V360M655.5 350V363M656.5 350V363M657.5 350V363M658.5 350V360M659.5 350V363M660.5 350V364M661.5 351V361M662.5 351V361M663.5 351V361M664.5 351V364M665.5 351V361M666.5 351V364M667.5 351V364M668.5 351V361M669.5 355V364M670.5 355V364M671.5 351V364M672.5 351V368M673.5 351V364M674.5 351V364M675.5 355V364M676.5 351V364M677.5 351V364M678.5 351V362M679.5 356V362M680.5 356V362M681.5 352V362M682.5 352V365M683.5 352V365M684.5 352V362M685.5 352V362M686.5 352V365M687.5 352V365M688.5 352V365M689.5 352V362M690.5 356V365M691.5 349V365M692.5 352V362M693.5 356V365M694.5 352V362M695.5 352V365M696.5 352V362M697.5 352V362M698.5 352V362M699.5 352V365M700.5 352V365M701.5 352V365M702.5 352V362M703.5 352V362M704.5 356V365M705.5 352V362M706.5 352V365M707.5 352V362M708.5 352V362M709.5 352V365M710.5 352V365M711.5 352V365M712.5 356V365M713.5 352V362M714.5 352V362M715.5 352V365M716.5 356V365M717.5 352V365M718.5 352V365M719.5 352V365M720.5 353V365M721.5 353V362M722.5 353V365M723.5 353V365M724.5 349V365M725.5 353V366M726.5 353V365M727.5 353V365M728.5 353V362M729.5 353V365M730.5 353V365M731.5 350V362M732.5 353V365M733.5 353V362M734.5 353V365M735.5 353V365M736.5 353V365M737.5 353V362M738.5 353V365M739.5 353V365M740.5 353V362M741.5 357V365M742.5 357V362M743.5 357V362M744.5 353V362M745.5 357V365M746.5 353V365M747.5 350V365M748.5 353V365M749.5 357V365M750.5 357V365M751.5 357V365M752.5 357V365M753.5 353V362M754.5 353V365M755.5 353V365M756.5 353V365M757.5 353V365M758.5 353V365M759.5 349V365M760.5 353V362M761.5 353V362M762.5 353V365M763.5 353V362M764.5 353V365M765.5 353V368M766.5 353V365M767.5 353V362M768.5 353V365M769.5 353V365M770.5 353V365M771.5 353V365M772.5 353V365M773.5 353V365M774.5 353V365M775.5 353V362M776.5 353V365M777.5 353V365M778.5 353V365M779.5 353V362M780.5 353V362M781.5 353V365M782.5 357V362M783.5 357V362M784.5 353V362M785.5 353V365M786.5 357V362M787.5 357V365M788.5 353V362M789.5 353V365M790.5 353V365M791.5 353V365M792.5 353V362M793.5 353V365M794.5 353V365M795.5 353V365M796.5 357V365M797.5 353V362M798.5 353V365M799.5 353V365M800.5 357V365M801.5 353V365M802.5 353V362M803.5 353V365M804.5 353V362M805.5 353V365M806.5 353V365M807.5 353V362M808.5 353V365M809.5 353V365M810.5 353V362M811.5 353V362M812.5 353V362M813.5 353V365M814.5 353V369M815.5 353V362M816.5 353V362M817.5 353V365M818.5 353V362M819.5 353V362M820.5 353V365M821.5 353V365M822.5 353V362M823.5 353V362M824.5 349V365M825.5 353V365M826.5 353V365M827.5 353V365M828.5 353V365M829.5 353V362M830.5 353V362M831.5 357V365M832.5 357V365M833.5 353V365M834.5 353V365M835.5 353V365M836.5 353V365M837.5 353V365M838.5 353V365M839.5 353V362M840.5 353V362M841.5 353V365M842.5 353V365M843.5 353V365M844.5 353V365M845.5 353V362M846.5 353V365M847.5 353V365M848.5 353V362M849.5 353V362M850.5 353V362M851.5 353V365M852.5 353V362M853.5 353V362M854.5 353V365M855.5 353V365M856.5 353V362M857.5 353V365M858.5 353V362M859.5 353V365M860.5 353V365M861.5 353V365M862.5 353V362M863.5 357V362M864.5 357V365M865.5 353V362M866.5 353V365M867.5 353V365M868.5 353V365M869.5 353V362M870.5 357V365M871.5 357V365M872.5 353V362M873.5 350V362M874.5 353V365M875.5 353V365M876.5 353V362M877.5 349V365M878.5 354V365M879.5 353V365M880.5 353V365M881.5 353V365M882.5 353V362M883.5 353V362M884.5 353V365M885.5 353V365M886.5 353V362M887.5 353V365M888.5 353V365M889.5 353V362M890.5 353V365M891.5 357V362M892.5 353V365M893.5 353V362M894.5 353V365M895.5 353V362M896.5 353V362M897.5 353V365M898.5 357V365M899.5 354V362M900.5 353V362M901.5 353V365M902.5 353V365M903.5 353V365M904.5 353V365M905.5 353V362M906.5 353V365M907.5 353V362M908.5 357V365M909.5 353V365M910.5 353V362M911.5 353V365M912.5 353V362M913.5 353V365M914.5 353V362M915.5 353V362M916.5 353V365M917.5 353V362M918.5 353V362M919.5 353V365M920.5 353V362M921.5 353V365M922.5 350V365M923.5 353V362M924.5 353V365M925.5 357V365M926.5 353V362M927.5 353V365M928.5 353V365M929.5 353V365M930.5 353V365M931.5 353V365M932.5 353V365M933.5 353V365M934.5 353V365M935.5 353V365M936.5 350V362M937.5 353V365M938.5 353V365M939.5 353V362M940.5 357V365M941.5 350V365M942.5 353V365M943.5 353V365M944.5 353V365M945.5 353V362M946.5 353V365M947.5 353V365M948.5 353V362M949.5 357V365M950.5 353V365M951.5 350V365M952.5 353V365M953.5 353V365M954.5 353V362M955.5 350V362M956.5 353V365M957.5 353V365M958.5 350V368M959.5 353V365M960.5 353V365M961.5 357V365M962.5 353V365M963.5 353V365M964.5 357V365M965.5 353V365M966.5 353V362M967.5 353V365M968.5 353V365M969.5 353V365M970.5 353V362M971.5 353V365M972.5 353V369M973.5 353V362M974.5 353V362M975.5 353V365M976.5 353V365M977.5 353V362M978.5 353V365M979.5 353V368M980.5 353V365M981.5 353V362M982.5 353V365M983.5 353V365M984.5 353V362M985.5 353V365M986.5 353V362M987.5 353V365M988.5 353V365M989.5 353V365M990.5 353V362M991.5 353V365M992.5 353V362M993.5 353V365M994.5 353V365M995.5 353V362M996.5 353V365M997.5 353V362M998.5 353V365M999.5 353V365M1000.5 353V362M1001.5 353V365M1002.5 353V365M1003.5 353V365M1004.5 353V365M1005.5 353V365M1006.5 353V365M1007.5 353V362M1008.5 353V365M1009.5 357V365M1010.5 353V362M1011.5 353V365M1012.5 353V365M1013.5 353V362M1014.5 353V365M1015.5 353V362M1016.5 357V365M1017.5 353V365M1018.5 357V362M1019.5 353V362M1020.5 353V365M1021.5 353V365M1022.5 357V365M1023.5 353V362M1024.5 353V365M1025.5 353V362M1026.5 353V368M1027.5 353V362M1028.5 353V362M1029.5 353V365M1030.5 353V365M1031.5 353V362M1032.5 357V365M1033.5 354V362M1034.5 357V362M1035.5 353V365M1036.5 353V362M1037.5 353V365M1038.5 353V365M1039.5 353V365M1040.5 353V362M1041.5 353V362M1042.5 353V365M1043.5 353V362M1044.5 353V365M1045.5 353V365M1046.5 353V365M1047.5 353V365M1048.5 353V369M1049.5 353V365M1050.5 353V362M1051.5 353V365M1052.5 353V365M1053.5 350V365M1054.5 353V362M1055.5 353V365M1056.5 353V365M1057.5 353V362M1058.5 353V369M1059.5 357V362M1060.5 353V365M1061.5 353V362M1062.5 353V362M1063.5 353V362M1064.5 353V365M1065.5 353V365M1066.5 353V365M1067.5 353V365M1068.5 353V362M1069.5 353V365M1070.5 353V365M1071.5 353V362M1072.5 353V365M1073.5 353V365M1074.5 357V365M1075.5 350V365M1076.5 353V365M1077.5 353V365M1078.5 353V365M1079.5 353V365M1080.5 353V366M1081.5 353V365M1082.5 353V362M1083.5 350V365M1084.5 353V365M1085.5 353V365M1086.5 353V365M1087.5 350V362M1088.5 353V362M1089.5 353V365M1090.5 353V365M1091.5 349V362M1092.5 353V365M1093.5 353V365M1094.5 353V365M1095.5 353V362M1096.5 353V365M1097.5 353V362M1098.5 353V362M1099.5 353V365M1100.5 353V365M1101.5 353V362M1102.5 353V365M1103.5 353V362M1104.5 353V365M1105.5 353V362M1106.5 353V369M1107.5 353V365M1108.5 353V365M1109.5 353V365M1110.5 353V365M1111.5 353V365M1112.5 353V362M1113.5 357V365M1114.5 353V362M1115.5 357V365M1116.5 357V365M1117.5 357V365M1118.5 353V365M1119.5 353V365M1120.5 353V365M1121.5 353V362M1122.5 353V362M1123.5 353V362M1124.5 353V365M1125.5 353V365M1126.5 353V365M1127.5 353V362M1128.5 353V362M1129.5 353V362M1130.5 353V365M1131.5 353V365M1132.5 353V365M1133.5 353V366M1134.5 353V362M1135.5 353V365M1136.5 353V365M1137.5 357V362M1138.5 354V365M1139.5 353V365M1140.5 353V365M1141.5 353V362M1142.5 353V362M1143.5 353V365M1144.5 353V365M1145.5 357V365M1146.5 357V365M1147.5 353V365M1148.5 353V365M1149.5 350V365M1150.5 353V366M1151.5 353V365M1152.5 353V365M1153.5 353V365M1154.5 353V365M1155.5 353V365M1156.5 353V362M1157.5 357V365M1158.5 349V365M1159.5 357V365M1160.5 353V365M1161.5 353V365M1162.5 350V365M1163.5 353V362M1164.5 353V365M1165.5 353V362M1166.5 357V362M1167.5 357V362M1168.5 353V362M1169.5 353V362M1170.5 353V365M1171.5 353V362M1172.5 353V365M1173.5 353V365M1174.5 353V365M1175.5 353V365M1176.5 353V365M1177.5 353V369M1178.5 353V365M1179.5 353V365M1180.5 353V369M1181.5 353V365M1182.5 353V365M1183.5 353V365M1184.5 353V365M1185.5 353V362M1186.5 353V362M1187.5 353V362M1188.5 353V362M1189.5 353V365M1190.5 353V365M1191.5 353V365M1192.5 353V362M1193.5 353V365M1194.5 353V366M1195.5 353V365M1196.5 357V365M1197.5 353V369M1198.5 353V365M1199.5 353V365M1200.5 357V365M1201.5 353V362M1202.5 357V362M1203.5 357V365M1204.5 353V365M1205.5 353V362M1206.5 353V362M1207.5 353V365M1208.5 350V365M1209.5 353V365M1210.5 353V365M1211.5 353V365M1212.5 353V362M1213.5 353V365M1214.5 353V365M1215.5 353V365M1216.5 357V365M1217.5 353V365M1218.5 353V362M1219.5 353V369M1220.5 353V362M1221.5 353V365M1222.5 350V362M1223.5 353V365M1224.5 353V362M1225.5 353V365M1226.5 353V362M1227.5 353V362M1228.5 350V365M1229.5 353V362M1230.5 349V365M1231.5 353V362M1232.5 353V369M1233.5 353V365M1234.5 353V365M1235.5 353V365M1236.5 353V362M1237.5 353V362M1238.5 353V365M1239.5 353V365M1240.5 353V365M1241.5 353V362M1242.5 353V362M1243.5 353V365M1244.5 353V365M1245.5 353V362M1246.5 353V365M1247.5 353V362M1248.5 353V362M1249.5 353V362M1250.5 353V365M1251.5 349V365M1252.5 353V362M1253.5 353V362M1254.5 353V365M1255.5 357V362M1256.5 353V365M1257.5 353V362M1258.5 353V365M1259.5 353V365M1260.5 353V365M1261.5 353V362M1262.5 353V365M1263.5 350V365M1264.5 353V365M1265.5 353V362M1266.5 353V365M1267.5 353V362M1268.5 353V365M1269.5 353V365M1270.5 353V362M1271.5 353V365M1272.5 353V368M1273.5 357V365M1274.5 353V362M1275.5 353V362M1276.5 353V362M1277.5 353V365M1278.5 353V365M1279.5 353V365M1280.5 353V365M1281.5 353V362M1282.5 353V365M1283.5 357V365M1284.5 353V362M1285.5 349V365M1286.5 353V365M1287.5 357V362M1288.5 353V365M1289.5 353V365M1290.5 350V365M1291.5 350V362M1292.5 353V365M1293.5 353V365M1294.5 353V365M1295.5 353V365M1296.5 353V365M1297.5 353V365M1298.5 353V362M1299.5 353V365M1300.5 353V365M1301.5 353V362M1302.5 354V365M1303.5 353V365M1304.5 353V365M1305.5 353V368M1306.5 353V362M1307.5 353V362M1308.5 353V365M1309.5 353V362M1310.5 353V365M1311.5 353V365M1312.5 353V365M1313.5 353V362M1314.5 353V365M1315.5 357V362M1316.5 357V362M1317.5 357V362M1318.5 357V362M1319.5 357V365M1320.5 353V365M1321.5 357V365M1322.5 357V365M1323.5 357V362M1324.5 357V365M1325.5 357V365M1326.5 357V362M1327.5 353V362M1328.5 353V362M1329.5 353V365M1330.5 353V362M1331.5 353V362M1332.5 353V362M1333.5 353V365M1334.5 353V365M1335.5 353V365M1336.5 353V365M1337.5 350V365M1338.5 353V362M1339.5 353V365M1340.5 353V365M1341.5 353V365M1342.5 357V365M1343.5 353V362M1344.5 353V366M1345.5 353V365M1346.5 353V365M1347.5 353V362M1348.5 353V365M1349.5 353V362M1350.5 353V365M1351.5 353V365M1352.5 353V365M1353.5 353V362M1354.5 353V365M1355.5 353V365M1356.5 353V365M1357.5 357V362M1358.5 353V365M1359.5 353V365M1360.5 353V365M1361.5 353V365M1362.5 353V362M1363.5 353V362M1364.5 353V365M1365.5 353V362M1366.5 353V362M1367.5 353V365M1368.5 353V362M1369.5 353V365M1370.5 357V362M1371.5 353V365M1372.5 353V369M1373.5 357V362M1374.5 353V365M1375.5 353V362M1376.5 353V362M1377.5 353V365M1378.5 353V362M1379.5 353V362M1380.5 353V362M1381.5 350V365M1382.5 353V362M1383.5 353V362M1384.5 353V365M1385.5 353V362M1386.5 353V362M1387.5 353V362M1388.5 353V365M1389.5 353V365M1390.5 353V365M1391.5 353V362M1392.5 353V362M1393.5 353V365M1394.5 353V362M1395.5 357V362M1396.5 357V365M1397.5 353V362M1398.5 353V362M1399.5 353V365M1400.5 353V365M1401.5 353V365M1402.5 353V365M1403.5 353V362M1404.5 357V365M1405.5 353V362M1406.5 353V362M1407.5 353V365M1408.5 353V365M1409.5 353V365M1410.5 353V365M1411.5 353V365M1412.5 353V365M1413.5 353V365M1414.5 353V362M1415.5 353V365M1416.5 357V362M1417.5 357V365M1418.5 357V365M1419.5 357V362M1420.5 353V362M1421.5 357V362M1422.5 353V365M1423.5 353V362M1424.5 353V365M1425.5 353V365M1426.5 357V362M1427.5 353V365M1428.5 357V365M1429.5 353V365M1430.5 353V365M1431.5 353V362M1432.5 353V365M1433.5 357V365M1434.5 353V362M1435.5 353V362M1436.5 353V362M1437.5 353V362M1438.5 353V362M1439.5 353V362M1440.5 353V369M1441.5 353V362M1442.5 353V365M1443.5 353V365M1444.5 353V362M1445.5 353V362M1446.5 353V362M1447.5 349V362M1448.5 353V362M1449.5 353V362M1450.5 353V365M1451.5 353V362M1452.5 353V362M1453.5 357V365M1454.5 357V365M1455.5 353V362M1456.5 357V365M1457.5 353V362M1458.5 353V365M1459.5 353V365M1460.5 353V362M1461.5 357V365M1462.5 354V365M1463.5 357V362M1464.5 353V362M1465.5 353V365M1466.5 353V365M1467.5 353V369M1468.5 353V365M1469.5 350V362M1470.5 353V365M1471.5 353V362M1472.5 353V362M1473.5 353V362M1474.5 353V362M1475.5 357V365M1476.5 353V362M1477.5 353V365M1478.5 353V365M1479.5 353V369M1480.5 353V365M1481.5 353V365M1482.5 353V362M1483.5 353V365M1484.5 357V362M1485.5 357V365M1486.5 357V362M1487.5 353V365M1488.5 353V365M1489.5 353V365M1490.5 357V369M1491.5 357V362M1492.5 353V365M1493.5 353V362M1494.5 353V365M1495.5 353V365M1496.5 349V365M1497.5 353V365M1498.5 353V365M1499.5 357V365M1500.5 353V365M1501.5 353V362M1502.5 353V365M1503.5 353V362M1504.5 353V365M1505.5 353V365M1506.5 353V365M1507.5 353V365M1508.5 353V365M1509.5 353V365M1510.5 353V365M1511.5 353V362M1512.5 353V365M1513.5 353V365M1514.5 353V365M1515.5 353V365M1516.5 357V362M1517.5 349V365M1518.5 353V362M1519.5 353V365M1520.5 350V362M1521.5 353V365M1522.5 353V362M1523.5 353V365M1524.5 353V365M1525.5 357V365M1526.5 357V365M1527.5 350V366M1528.5 353V362M1529.5 353V365M1530.5 353V362M1531.5 353V365M1532.5 353V365M1533.5 357V365M1534.5 353V362M1535.5 353V362M1536.5 353V365M1537.5 357V365M1538.5 357V365M1539.5 357V362M1540.5 353V362M1541.5 353V365M1542.5 353V362M1543.5 353V362M1544.5 353V365M1545.5 353V365M1546.5 353V365M1547.5 353V365M1548.5 357V362M1549.5 357V365M1550.5 357V362M1551.5 357V365M1552.5 353V365M1553.5 353V362M1554.5 353V362M1555.5 353V365M1556.5 353V362M1557.5 353V365M1558.5 353V365M1559.5 353V365M1560.5 353V365M1561.5 353V365M1562.5 353V365M1563.5 353V362M1564.5 353V365M1565.5 353V362M1566.5 353V365M1567.5 353V365M1568.5 353V362M1569.5 353V365M1570.5 353V365M1571.5 353V365M1572.5 353V365M1573.5 357V365M1574.5 357V362M1575.5 353V365M1576.5 353V362M1577.5 357V362M1578.5 353V362M1579.5 349V362M1580.5 353V365M1581.5 353V362M1582.5 353V365M1583.5 353V365M1584.5 353V362M1585.5 353V365M1586.5 353V362M1587.5 353V362M1588.5 353V365M1589.5 350V365M1590.5 353V362M1591.5 357V362M1592.5 357V365M1593.5 353V365M1594.5 353V365M1595.5 353V362M1596.5 357V362M1597.5 357V369M1598.5 353V362M1599.5 353V362M1600.5 353V365M1601.5 353V365M1602.5 350V362M1603.5 353V365M1604.5 353V365M1605.5 357V362M1606.5 353V365M1607.5 353V365M1608.5 353V365M1609.5 353V365M1610.5 353V365M1611.5 353V362M1612.5 357V365M1613.5 357V362M1614.5 357V362M1615.5 357V365M1616.5 353V365M1617.5 353V365M1618.5 353V362M1619.5 353V362M1620.5 353V362M1621.5 353V365M1622.5 353V365M1623.5 353V365M1624.5 353V362M1625.5 353V365M1626.5 353V365M1627.5 353V362M1628.5 357V365M1629.5 353V365M1630.5 353V362M1631.5 353V362M1632.5 357V362M1633.5 357V362M1634.5 353V365M1635.5 353V362M1636.5 353V362M1637.5 353V365M1638.5 353V362M1639.5 353V365M1640.5 353V365M1641.5 354V365M1642.5 353V365M1643.5 357V365M1644.5 353V365M1645.5 353V362M1646.5 349V365M1647.5 353V365M1648.5 353V362M1649.5 353V362M1650.5 353V365M1651.5 353V365M1652.5 353V365M1653.5 353V365M1654.5 349V362M1655.5 353V365M1656.5 353V365M1657.5 353V365M1658.5 353V362M1659.5 353V362M1660.5 353V362M1661.5 357V362M1662.5 353V362M1663.5 353V365M1664.5 353V365M1665.5 353V365M1666.5 353V365M1667.5 353V365M1668.5 350V365M1669.5 353V362M1670.5 353V365M1671.5 353V362M1672.5 357V365M1673.5 353V362M1674.5 357V362M1675.5 353V365M1676.5 353V365M1677.5 353V365M1678.5 350V365M1679.5 353V362M1680.5 353V365M1681.5 353V362M1682.5 353V365M1683.5 357V365M1684.5 357V365M1685.5 353V362M1686.5 353V362M1687.5 353V365M1688.5 353V365M1689.5 353V362M1690.5 353V362M1691.5 353V365M1692.5 353V365M1693.5 353V365M1694.5 357V365M1695.5 353V365M1696.5 353V365M1697.5 353V362M1698.5 357V362M1699.5 353V362M1700.5 357V365M1701.5 357V362M1702.5 353V362M1703.5 353V365M1704.5 353V365M1705.5 353V365M1706.5 353V365M1707.5 357V362M1708.5 353V362M1709.5 353V362M1710.5 353V365M1711.5 353V365M1712.5 357V362M1713.5 357V365M1714.5 353V365M1715.5 353V362M1716.5 353V365M1717.5 357V365M1718.5 353V362M1719.5 353V362M1720.5 353V365M1721.5 353V365M1722.5 353V365M1723.5 353V362M1724.5 353V362M1725.5 353V365M1726.5 353V365M1727.5 353V369M1728.5 353V362M1729.5 353V365M1730.5 353V362M1731.5 353V365M1732.5 357V365M1733.5 353V365M1734.5 357V365M1735.5 357V365M1736.5 353V362M1737.5 353V365M1738.5 357V365M1739.5 357V365M1740.5 357V365M1741.5 353V362M1742.5 353V362M1743.5 353V365M1744.5 353V365M1745.5 349V365M1746.5 353V365M1747.5 353V362M1748.5 353V362M1749.5 353V362M1750.5 357V362"/>
</g>
<path d="M3 137h1.15v1.15h-1.15zM38 137h1.15v1.15h-1.15zM73 137h1.15v1.15h-1.15zM108 137h1.15v1.15h-1.15zM143 137h1.15v1.15h-1.15zM178 137h1.15v1.15h-1.15zM213 137h1.15v1.15h-1.15zM248 137h1.15v1.15h-1.15zM283 137h1.15v1.15h-1.15zM318 137h1.15v1.15h-1.15zM352 137h1.15v1.15h-1.15zM387 137h1.15v1.15h-1.15zM422 137h1.15v1.15h-1.15zM457 137h1.15v1.15h-1.15zM492 137h1.15v1.15h-1.15zM527 137h1.15v1.15h-1.15zM562 137h1.15v1.15h-1.15zM597 137h1.15v1.15h-1.15zM632 137h1.15v1.15h-1.15zM667 137h1.15v1.15h-1.15zM702 137h1.15v1.15h-1.15zM737 137h1.15v1.15h-1.15zM772 137h1.15v1.15h-1.15zM807 137h1.15v1.15h-1.15zM842 137h1.15v1.15h-1.15zM877 137h1.15v1.15h-1.15zM912 137h1.15v1.15h-1.15zM947 137h1.15v1.15h-1.15zM982 137h1.15v1.15h-1.15zM1017 137h1.15v1.15h-1.15zM1052 137h1.15v1.15h-1.15zM1086 137h1.15v1.15h-1.15zM1121 137h1.15v1.15h-1.15zM1156 137h1.15v1.15h-1.15zM1191 137h1.15v1.15h-1.15zM1226 137h1.15v1.15h-1.15zM1261 137h1.15v1.15h-1.15zM1296 137h1.15v1.15h-1.15zM1331 137h1.15v1.15h-1.15zM1366 137h1.15v1.15h-1.15zM1401 137h1.15v1.15h-1.15zM1436 137h1.15v1.15h-1.15zM1471 137h1.15v1.15h-1.15zM1506 137h1.15v1.15h-1.15zM1541 137h1.15v1.15h-1.15zM1576 137h1.15v1.15h-1.15zM1611 137h1.15v1.15h-1.15zM1646 137h1.15v1.15h-1.15zM1681 137h1.15v1.15h-1.15zM3 231h1.15v1.15h-1.15zM38 231h1.15v1.15h-1.15zM73 231h1.15v1.15h-1.15zM108 231h1.15v1.15h-1.15zM143 231h1.15v1.15h-1.15zM178 231h1.15v1.15h-1.15zM213 231h1.15v1.15h-1.15zM248 231h1.15v1.15h-1.15zM283 231h1.15v1.15h-1.15zM318 231h1.15v1.15h-1.15zM352 231h1.15v1.15h-1.15zM387 231h1.15v1.15h-1.15zM422 231h1.15v1.15h-1.15zM457 231h1.15v1.15h-1.15zM492 231h1.15v1.15h-1.15zM527 231h1.15v1.15h-1.15zM562 231h1.15v1.15h-1.15zM597 231h1.15v1.15h-1.15zM632 231h1.15v1.15h-1.15zM667 231h1.15v1.15h-1.15zM702 231h1.15v1.15h-1.15zM737 231h1.15v1.15h-1.15zM772 231h1.15v1.15h-1.15zM807 231h1.15v1.15h-1.15zM842 231h1.15v1.15h-1.15zM877 231h1.15v1.15h-1.15zM912 231h1.15v1.15h-1.15zM947 231h1.15v1.15h-1.15zM982 231h1.15v1.15h-1.15zM1017 231h1.15v1.15h-1.15zM1052 231h1.15v1.15h-1.15zM1086 231h1.15v1.15h-1.15zM1121 231h1.15v1.15h-1.15zM1156 231h1.15v1.15h-1.15zM1191 231h1.15v1.15h-1.15zM1226 231h1.15v1.15h-1.15zM1261 231h1.15v1.15h-1.15zM1296 231h1.15v1.15h-1.15zM1331 231h1.15v1.15h-1.15zM1366 231h1.15v1.15h-1.15zM1401 231h1.15v1.15h-1.15zM1436 231h1.15v1.15h-1.15zM1471 231h1.15v1.15h-1.15zM1506 231h1.15v1.15h-1.15zM1541 231h1.15v1.15h-1.15zM1576 231h1.15v1.15h-1.15zM1611 231h1.15v1.15h-1.15zM1646 231h1.15v1.15h-1.15zM1681 231h1.15v1.15h-1.15zM3 418h1.15v1.15h-1.15zM38 418h1.15v1.15h-1.15zM73 418h1.15v1.15h-1.15zM108 418h1.15v1.15h-1.15zM143 418h1.15v1.15h-1.15zM178 418h1.15v1.15h-1.15zM213 418h1.15v1.15h-1.15zM248 418h1.15v1.15h-1.15zM283 418h1.15v1.15h-1.15zM318 418h1.15v1.15h-1.15zM352 418h1.15v1.15h-1.15zM387 418h1.15v1.15h-1.15zM422 418h1.15v1.15h-1.15zM457 418h1.15v1.15h-1.15zM492 418h1.15v1.15h-1.15zM527 418h1.15v1.15h-1.15zM562 418h1.15v1.15h-1.15zM597 418h1.15v1.15h-1.15zM632 418h1.15v1.15h-1.15zM667 418h1.15v1.15h-1.15zM702 418h1.15v1.15h-1.15zM737 418h1.15v1.15h-1.15zM772 418h1.15v1.15h-1.15zM807 418h1.15v1.15h-1.15zM842 418h1.15v1.15h-1.15zM877 418h1.15v1.15h-1.15zM912 418h1.15v1.15h-1.15zM947 418h1.15v1.15h-1.15zM982 418h1.15v1.15h-1.15zM1017 418h1.15v1.15h-1.15zM1052 418h1.15v1.15h-1.15zM1086 418h1.15v1.15h-1.15zM1121 418h1.15v1.15h-1.15zM1156 418h1.15v1.15h-1.15zM1191 418h1.15v1.15h-1.15zM1226 418h1.15v1.15h-1.15zM1261 418h1.15v1.15h-1.15zM1296 418h1.15v1.15h-1.15zM1331 418h1.15v1.15h-1.15zM1366 418h1.15v1.15h-1.15zM1401 418h1.15v1.15h-1.15zM1436 418h1.15v1.15h-1.15zM1471 418h1.15v1.15h-1.15zM1506 418h1.15v1.15h-1.15zM1541 418h1.15v1.15h-1.15zM1576 418h1.15v1.15h-1.15zM1611 418h1.15v1.15h-1.15zM1646 418h1.15v1.15h-1.15zM1681 418h1.15v1.15h-1.15zM3 511h1.15v1.15h-1.15zM38 511h1.15v1.15h-1.15zM73 511h1.15v1.15h-1.15zM108 511h1.15v1.15h-1.15zM143 511h1.15v1.15h-1.15zM178 511h1.15v1.15h-1.15zM213 511h1.15v1.15h-1.15zM248 511h1.15v1.15h-1.15zM283 511h1.15v1.15h-1.15zM318 511h1.15v1.15h-1.15zM352 511h1.15v1.15h-1.15zM387 511h1.15v1.15h-1.15zM422 511h1.15v1.15h-1.15zM457 511h1.15v1.15h-1.15zM492 511h1.15v1.15h-1.15zM527 511h1.15v1.15h-1.15zM562 511h1.15v1.15h-1.15zM597 511h1.15v1.15h-1.15zM632 511h1.15v1.15h-1.15zM667 511h1.15v1.15h-1.15zM702 511h1.15v1.15h-1.15zM737 511h1.15v1.15h-1.15zM772 511h1.15v1.15h-1.15zM807 511h1.15v1.15h-1.15zM842 511h1.15v1.15h-1.15zM877 511h1.15v1.15h-1.15zM912 511h1.15v1.15h-1.15zM947 511h1.15v1.15h-1.15zM982 511h1.15v1.15h-1.15zM1017 511h1.15v1.15h-1.15zM1052 511h1.15v1.15h-1.15zM1086 511h1.15v1.15h-1.15zM1121 511h1.15v1.15h-1.15zM1156 511h1.15v1.15h-1.15zM1191 511h1.15v1.15h-1.15zM1226 511h1.15v1.15h-1.15zM1261 511h1.15v1.15h-1.15zM1296 511h1.15v1.15h-1.15zM1331 511h1.15v1.15h-1.15zM1366 511h1.15v1.15h-1.15zM1401 511h1.15v1.15h-1.15zM1436 511h1.15v1.15h-1.15zM1471 511h1.15v1.15h-1.15zM1506 511h1.15v1.15h-1.15zM1541 511h1.15v1.15h-1.15zM1576 511h1.15v1.15h-1.15zM1611 511h1.15v1.15h-1.15zM1646 511h1.15v1.15h-1.15zM1681 511h1.15v1.15h-1.15zM3 605h1.15v1.15h-1.15zM38 605h1.15v1.15h-1.15zM73 605h1.15v1.15h-1.15zM108 605h1.15v1.15h-1.15zM143 605h1.15v1.15h-1.15zM178 605h1.15v1.15h-1.15zM213 605h1.15v1.15h-1.15zM248 605h1.15v1.15h-1.15zM283 605h1.15v1.15h-1.15zM318 605h1.15v1.15h-1.15zM352 605h1.15v1.15h-1.15zM387 605h1.15v1.15h-1.15zM422 605h1.15v1.15h-1.15zM457 605h1.15v1.15h-1.15zM492 605h1.15v1.15h-1.15zM527 605h1.15v1.15h-1.15zM562 605h1.15v1.15h-1.15zM597 605h1.15v1.15h-1.15zM632 605h1.15v1.15h-1.15zM667 605h1.15v1.15h-1.15zM702 605h1.15v1.15h-1.15zM737 605h1.15v1.15h-1.15zM772 605h1.15v1.15h-1.15zM807 605h1.15v1.15h-1.15zM842 605h1.15v1.15h-1.15zM877 605h1.15v1.15h-1.15zM912 605h1.15v1.15h-1.15zM947 605h1.15v1.15h-1.15zM982 605h1.15v1.15h-1.15zM1017 605h1.15v1.15h-1.15zM1052 605h1.15v1.15h-1.15zM1086 605h1.15v1.15h-1.15zM1121 605h1.15v1.15h-1.15zM1156 605h1.15v1.15h-1.15zM1191 605h1.15v1.15h-1.15zM1226 605h1.15v1.15h-1.15zM1261 605h1.15v1.15h-1.15zM1296 605h1.15v1.15h-1.15zM1331 605h1.15v1.15h-1.15zM1366 605h1.15v1.15h-1.15zM1401 605h1.15v1.15h-1.15zM1436 605h1.15v1.15h-1.15zM1471 605h1.15v1.15h-1.15zM1506 605h1.15v1.15h-1.15zM1541 605h1.15v1.15h-1.15zM1576 605h1.15v1.15h-1.15zM1611 605h1.15v1.15h-1.15zM1646 605h1.15v1.15h-1.15zM1681 605h1.15v1.15h-1.15zM3 698h1.15v1.15h-1.15zM38 698h1.15v1.15h-1.15zM73 698h1.15v1.15h-1.15zM108 698h1.15v1.15h-1.15zM143 698h1.15v1.15h-1.15zM178 698h1.15v1.15h-1.15zM213 698h1.15v1.15h-1.15zM248 698h1.15v1.15h-1.15zM283 698h1.15v1.15h-1.15zM318 698h1.15v1.15h-1.15zM352 698h1.15v1.15h-1.15zM387 698h1.15v1.15h-1.15zM422 698h1.15v1.15h-1.15zM457 698h1.15v1.15h-1.15zM492 698h1.15v1.15h-1.15zM527 698h1.15v1.15h-1.15zM562 698h1.15v1.15h-1.15zM597 698h1.15v1.15h-1.15zM632 698h1.15v1.15h-1.15zM667 698h1.15v1.15h-1.15zM702 698h1.15v1.15h-1.15zM737 698h1.15v1.15h-1.15zM772 698h1.15v1.15h-1.15zM807 698h1.15v1.15h-1.15zM842 698h1.15v1.15h-1.15zM877 698h1.15v1.15h-1.15zM912 698h1.15v1.15h-1.15zM947 698h1.15v1.15h-1.15zM982 698h1.15v1.15h-1.15zM1017 698h1.15v1.15h-1.15zM1052 698h1.15v1.15h-1.15zM1086 698h1.15v1.15h-1.15zM1121 698h1.15v1.15h-1.15zM1156 698h1.15v1.15h-1.15zM1191 698h1.15v1.15h-1.15zM1226 698h1.15v1.15h-1.15zM1261 698h1.15v1.15h-1.15zM1296 698h1.15v1.15h-1.15zM1331 698h1.15v1.15h-1.15zM1366 698h1.15v1.15h-1.15zM1401 698h1.15v1.15h-1.15zM1436 698h1.15v1.15h-1.15zM1471 698h1.15v1.15h-1.15zM1506 698h1.15v1.15h-1.15zM1541 698h1.15v1.15h-1.15zM1576 698h1.15v1.15h-1.15zM1611 698h1.15v1.15h-1.15zM1646 698h1.15v1.15h-1.15zM1681 698h1.15v1.15h-1.15zM3 792h1.15v1.15h-1.15zM38 792h1.15v1.15h-1.15zM73 792h1.15v1.15h-1.15zM108 792h1.15v1.15h-1.15zM143 792h1.15v1.15h-1.15zM178 792h1.15v1.15h-1.15zM213 792h1.15v1.15h-1.15zM248 792h1.15v1.15h-1.15zM283 792h1.15v1.15h-1.15zM318 792h1.15v1.15h-1.15zM352 792h1.15v1.15h-1.15zM387 792h1.15v1.15h-1.15zM422 792h1.15v1.15h-1.15zM457 792h1.15v1.15h-1.15zM492 792h1.15v1.15h-1.15zM527 792h1.15v1.15h-1.15zM562 792h1.15v1.15h-1.15zM597 792h1.15v1.15h-1.15zM632 792h1.15v1.15h-1.15zM667 792h1.15v1.15h-1.15zM702 792h1.15v1.15h-1.15zM737 792h1.15v1.15h-1.15zM772 792h1.15v1.15h-1.15zM807 792h1.15v1.15h-1.15zM842 792h1.15v1.15h-1.15zM877 792h1.15v1.15h-1.15zM912 792h1.15v1.15h-1.15zM947 792h1.15v1.15h-1.15zM982 792h1.15v1.15h-1.15zM1017 792h1.15v1.15h-1.15zM1052 792h1.15v1.15h-1.15zM1086 792h1.15v1.15h-1.15zM1121 792h1.15v1.15h-1.15zM1156 792h1.15v1.15h-1.15zM1191 792h1.15v1.15h-1.15zM1226 792h1.15v1.15h-1.15zM1261 792h1.15v1.15h-1.15zM1296 792h1.15v1.15h-1.15zM1331 792h1.15v1.15h-1.15zM1366 792h1.15v1.15h-1.15zM1401 792h1.15v1.15h-1.15zM1436 792h1.15v1.15h-1.15zM1471 792h1.15v1.15h-1.15zM1506 792h1.15v1.15h-1.15zM1541 792h1.15v1.15h-1.15zM1576 792h1.15v1.15h-1.15zM1611 792h1.15v1.15h-1.15zM1646 792h1.15v1.15h-1.15zM1681 792h1.15v1.15h-1.15zM3 885h1.15v1.15h-1.15zM38 885h1.15v1.15h-1.15zM73 885h1.15v1.15h-1.15zM108 885h1.15v1.15h-1.15zM143 885h1.15v1.15h-1.15zM178 885h1.15v1.15h-1.15zM213 885h1.15v1.15h-1.15zM248 885h1.15v1.15h-1.15zM283 885h1.15v1.15h-1.15zM318 885h1.15v1.15h-1.15zM352 885h1.15v1.15h-1.15zM387 885h1.15v1.15h-1.15zM422 885h1.15v1.15h-1.15zM457 885h1.15v1.15h-1.15zM492 885h1.15v1.15h-1.15zM527 885h1.15v1.15h-1.15zM562 885h1.15v1.15h-1.15zM597 885h1.15v1.15h-1.15zM632 885h1.15v1.15h-1.15zM667 885h1.15v1.15h-1.15zM702 885h1.15v1.15h-1.15zM737 885h1.15v1.15h-1.15zM772 885h1.15v1.15h-1.15zM807 885h1.15v1.15h-1.15zM842 885h1.15v1.15h-1.15zM877 885h1.15v1.15h-1.15zM912 885h1.15v1.15h-1.15zM947 885h1.15v1.15h-1.15zM982 885h1.15v1.15h-1.15zM1017 885h1.15v1.15h-1.15zM1052 885h1.15v1.15h-1.15zM1086 885h1.15v1.15h-1.15zM1121 885h1.15v1.15h-1.15zM1156 885h1.15v1.15h-1.15zM1191 885h1.15v1.15h-1.15zM1226 885h1.15v1.15h-1.15zM1261 885h1.15v1.15h-1.15zM1296 885h1.15v1.15h-1.15zM1331 885h1.15v1.15h-1.15zM1366 885h1.15v1.15h-1.15zM1401 885h1.15v1.15h-1.15zM1436 885h1.15v1.15h-1.15zM1471 885h1.15v1.15h-1.15zM1506 885h1.15v1.15h-1.15zM1541 885h1.15v1.15h-1.15zM1576 885h1.15v1.15h-1.15zM1611 885h1.15v1.15h-1.15zM1646 885h1.15v1.15h-1.15zM1681 885h1.15v1.15h-1.15zM3 979h1.15v1.15h-1.15zM38 979h1.15v1.15h-1.15zM73 979h1.15v1.15h-1.15zM108 979h1.15v1.15h-1.15zM143 979h1.15v1.15h-1.15zM178 979h1.15v1.15h-1.15zM213 979h1.15v1.15h-1.15zM248 979h1.15v1.15h-1.15zM283 979h1.15v1.15h-1.15zM318 979h1.15v1.15h-1.15zM352 979h1.15v1.15h-1.15zM387 979h1.15v1.15h-1.15zM422 979h1.15v1.15h-1.15zM457 979h1.15v1.15h-1.15zM492 979h1.15v1.15h-1.15zM527 979h1.15v1.15h-1.15zM562 979h1.15v1.15h-1.15zM597 979h1.15v1.15h-1.15zM632 979h1.15v1.15h-1.15zM667 979h1.15v1.15h-1.15zM702 979h1.15v1.15h-1.15zM737 979h1.15v1.15h-1.15zM772 979h1.15v1.15h-1.15zM807 979h1.15v1.15h-1.15zM842 979h1.15v1.15h-1.15zM877 979h1.15v1.15h-1.15zM912 979h1.15v1.15h-1.15zM947 979h1.15v1.15h-1.15zM982 979h1.15v1.15h-1.15zM1017 979h1.15v1.15h-1.15zM1052 979h1.15v1.15h-1.15zM1086 979h1.15v1.15h-1.15zM1121 979h1.15v1.15h-1.15zM1156 979h1.15v1.15h-1.15zM1191 979h1.15v1.15h-1.15zM1226 979h1.15v1.15h-1.15zM1261 979h1.15v1.15h-1.15zM1296 979h1.15v1.15h-1.15zM1331 979h1.15v1.15h-1.15zM1366 979h1.15v1.15h-1.15zM1401 979h1.15v1.15h-1.15zM1436 979h1.15v1.15h-1.15zM1471 979h1.15v1.15h-1.15zM1506 979h1.15v1.15h-1.15zM1541 979h1.15v1.15h-1.15zM1576 979h1.15v1.15h-1.15zM1611 979h1.15v1.15h-1.15zM1646 979h1.15v1.15h-1.15zM1681 979h1.15v1.15h-1.15zM3 62h1.15v1.15h-1.15zM3 81h1.15v1.15h-1.15zM3 100h1.15v1.15h-1.15zM3 118h1.15v1.15h-1.15zM3 137h1.15v1.15h-1.15zM3 156h1.15v1.15h-1.15zM3 174h1.15v1.15h-1.15zM3 193h1.15v1.15h-1.15zM3 212h1.15v1.15h-1.15zM3 231h1.15v1.15h-1.15zM3 249h1.15v1.15h-1.15zM3 268h1.15v1.15h-1.15zM3 287h1.15v1.15h-1.15zM3 305h1.15v1.15h-1.15zM3 324h1.15v1.15h-1.15zM3 343h1.15v1.15h-1.15zM3 361h1.15v1.15h-1.15zM3 380h1.15v1.15h-1.15zM3 399h1.15v1.15h-1.15zM3 418h1.15v1.15h-1.15zM3 436h1.15v1.15h-1.15zM3 455h1.15v1.15h-1.15zM3 474h1.15v1.15h-1.15zM3 492h1.15v1.15h-1.15zM3 511h1.15v1.15h-1.15zM3 530h1.15v1.15h-1.15zM3 549h1.15v1.15h-1.15zM3 567h1.15v1.15h-1.15zM3 586h1.15v1.15h-1.15zM3 605h1.15v1.15h-1.15zM3 623h1.15v1.15h-1.15zM3 642h1.15v1.15h-1.15zM3 661h1.15v1.15h-1.15zM3 679h1.15v1.15h-1.15zM3 698h1.15v1.15h-1.15zM3 717h1.15v1.15h-1.15zM3 736h1.15v1.15h-1.15zM3 754h1.15v1.15h-1.15zM3 773h1.15v1.15h-1.15zM3 792h1.15v1.15h-1.15zM3 810h1.15v1.15h-1.15zM3 829h1.15v1.15h-1.15zM3 848h1.15v1.15h-1.15zM3 867h1.15v1.15h-1.15zM3 885h1.15v1.15h-1.15zM3 904h1.15v1.15h-1.15zM3 923h1.15v1.15h-1.15zM3 941h1.15v1.15h-1.15zM3 960h1.15v1.15h-1.15zM3 979h1.15v1.15h-1.15zM178 62h1.15v1.15h-1.15zM178 81h1.15v1.15h-1.15zM353 62h1.15v1.15h-1.15zM353 81h1.15v1.15h-1.15zM353 100h1.15v1.15h-1.15zM353 118h1.15v1.15h-1.15zM353 137h1.15v1.15h-1.15zM353 156h1.15v1.15h-1.15zM353 174h1.15v1.15h-1.15zM353 193h1.15v1.15h-1.15zM353 212h1.15v1.15h-1.15zM353 231h1.15v1.15h-1.15zM353 249h1.15v1.15h-1.15zM353 268h1.15v1.15h-1.15zM353 287h1.15v1.15h-1.15zM353 305h1.15v1.15h-1.15zM353 324h1.15v1.15h-1.15zM353 343h1.15v1.15h-1.15zM353 361h1.15v1.15h-1.15zM353 380h1.15v1.15h-1.15zM353 399h1.15v1.15h-1.15zM353 418h1.15v1.15h-1.15zM353 436h1.15v1.15h-1.15zM353 455h1.15v1.15h-1.15zM353 474h1.15v1.15h-1.15zM353 492h1.15v1.15h-1.15zM353 511h1.15v1.15h-1.15zM353 530h1.15v1.15h-1.15zM353 549h1.15v1.15h-1.15zM353 567h1.15v1.15h-1.15zM353 586h1.15v1.15h-1.15zM353 605h1.15v1.15h-1.15zM353 623h1.15v1.15h-1.15zM353 642h1.15v1.15h-1.15zM353 661h1.15v1.15h-1.15zM353 679h1.15v1.15h-1.15zM353 698h1.15v1.15h-1.15zM353 717h1.15v1.15h-1.15zM353 736h1.15v1.15h-1.15zM353 754h1.15v1.15h-1.15zM353 773h1.15v1.15h-1.15zM353 792h1.15v1.15h-1.15zM353 810h1.15v1.15h-1.15zM353 829h1.15v1.15h-1.15zM353 848h1.15v1.15h-1.15zM353 867h1.15v1.15h-1.15zM353 885h1.15v1.15h-1.15zM353 904h1.15v1.15h-1.15zM353 923h1.15v1.15h-1.15zM353 941h1.15v1.15h-1.15zM353 960h1.15v1.15h-1.15zM353 979h1.15v1.15h-1.15zM527 62h1.15v1.15h-1.15zM527 81h1.15v1.15h-1.15zM527 100h1.15v1.15h-1.15zM527 118h1.15v1.15h-1.15zM527 137h1.15v1.15h-1.15zM527 156h1.15v1.15h-1.15zM527 174h1.15v1.15h-1.15zM527 193h1.15v1.15h-1.15zM527 212h1.15v1.15h-1.15zM527 231h1.15v1.15h-1.15zM527 249h1.15v1.15h-1.15zM527 268h1.15v1.15h-1.15zM527 287h1.15v1.15h-1.15zM527 305h1.15v1.15h-1.15zM527 324h1.15v1.15h-1.15zM527 343h1.15v1.15h-1.15zM527 361h1.15v1.15h-1.15zM527 380h1.15v1.15h-1.15zM527 399h1.15v1.15h-1.15zM527 418h1.15v1.15h-1.15zM527 436h1.15v1.15h-1.15zM527 455h1.15v1.15h-1.15zM527 474h1.15v1.15h-1.15zM527 492h1.15v1.15h-1.15zM527 511h1.15v1.15h-1.15zM527 530h1.15v1.15h-1.15zM527 549h1.15v1.15h-1.15zM527 567h1.15v1.15h-1.15zM527 586h1.15v1.15h-1.15zM527 605h1.15v1.15h-1.15zM527 623h1.15v1.15h-1.15zM527 642h1.15v1.15h-1.15zM527 661h1.15v1.15h-1.15zM527 679h1.15v1.15h-1.15zM527 698h1.15v1.15h-1.15zM527 717h1.15v1.15h-1.15zM527 736h1.15v1.15h-1.15zM527 754h1.15v1.15h-1.15zM527 773h1.15v1.15h-1.15zM527 792h1.15v1.15h-1.15zM527 810h1.15v1.15h-1.15zM527 829h1.15v1.15h-1.15zM527 848h1.15v1.15h-1.15zM527 867h1.15v1.15h-1.15zM527 885h1.15v1.15h-1.15zM527 904h1.15v1.15h-1.15zM527 923h1.15v1.15h-1.15zM527 941h1.15v1.15h-1.15zM527 960h1.15v1.15h-1.15zM527 979h1.15v1.15h-1.15zM702 62h1.15v1.15h-1.15zM702 81h1.15v1.15h-1.15zM702 100h1.15v1.15h-1.15zM702 118h1.15v1.15h-1.15zM702 137h1.15v1.15h-1.15zM702 156h1.15v1.15h-1.15zM702 174h1.15v1.15h-1.15zM702 193h1.15v1.15h-1.15zM702 212h1.15v1.15h-1.15zM702 231h1.15v1.15h-1.15zM702 249h1.15v1.15h-1.15zM702 268h1.15v1.15h-1.15zM702 287h1.15v1.15h-1.15zM702 305h1.15v1.15h-1.15zM702 324h1.15v1.15h-1.15zM702 343h1.15v1.15h-1.15zM702 361h1.15v1.15h-1.15zM702 380h1.15v1.15h-1.15zM702 399h1.15v1.15h-1.15zM702 418h1.15v1.15h-1.15zM702 436h1.15v1.15h-1.15zM702 455h1.15v1.15h-1.15zM702 474h1.15v1.15h-1.15zM702 492h1.15v1.15h-1.15zM702 511h1.15v1.15h-1.15zM702 530h1.15v1.15h-1.15zM702 549h1.15v1.15h-1.15zM702 567h1.15v1.15h-1.15zM702 586h1.15v1.15h-1.15zM702 605h1.15v1.15h-1.15zM702 623h1.15v1.15h-1.15zM702 642h1.15v1.15h-1.15zM702 661h1.15v1.15h-1.15zM702 679h1.15v1.15h-1.15zM702 698h1.15v1.15h-1.15zM702 717h1.15v1.15h-1.15zM702 736h1.15v1.15h-1.15zM702 754h1.15v1.15h-1.15zM702 773h1.15v1.15h-1.15zM702 792h1.15v1.15h-1.15zM702 810h1.15v1.15h-1.15zM702 829h1.15v1.15h-1.15zM702 848h1.15v1.15h-1.15zM702 867h1.15v1.15h-1.15zM702 885h1.15v1.15h-1.15zM702 904h1.15v1.15h-1.15zM702 923h1.15v1.15h-1.15zM702 941h1.15v1.15h-1.15zM702 960h1.15v1.15h-1.15zM702 979h1.15v1.15h-1.15zM877 62h1.15v1.15h-1.15zM877 81h1.15v1.15h-1.15zM877 100h1.15v1.15h-1.15zM877 118h1.15v1.15h-1.15zM877 137h1.15v1.15h-1.15zM877 156h1.15v1.15h-1.15zM877 174h1.15v1.15h-1.15zM877 193h1.15v1.15h-1.15zM877 212h1.15v1.15h-1.15zM877 231h1.15v1.15h-1.15zM877 249h1.15v1.15h-1.15zM877 268h1.15v1.15h-1.15zM877 287h1.15v1.15h-1.15zM877 305h1.15v1.15h-1.15zM877 324h1.15v1.15h-1.15zM877 343h1.15v1.15h-1.15zM877 361h1.15v1.15h-1.15zM877 380h1.15v1.15h-1.15zM877 399h1.15v1.15h-1.15zM877 418h1.15v1.15h-1.15zM877 436h1.15v1.15h-1.15zM877 455h1.15v1.15h-1.15zM877 474h1.15v1.15h-1.15zM877 492h1.15v1.15h-1.15zM877 511h1.15v1.15h-1.15zM877 530h1.15v1.15h-1.15zM877 549h1.15v1.15h-1.15zM877 567h1.15v1.15h-1.15zM877 586h1.15v1.15h-1.15zM877 605h1.15v1.15h-1.15zM877 623h1.15v1.15h-1.15zM877 642h1.15v1.15h-1.15zM877 661h1.15v1.15h-1.15zM877 679h1.15v1.15h-1.15zM877 698h1.15v1.15h-1.15zM877 717h1.15v1.15h-1.15zM877 736h1.15v1.15h-1.15zM877 754h1.15v1.15h-1.15zM877 773h1.15v1.15h-1.15zM877 792h1.15v1.15h-1.15zM877 810h1.15v1.15h-1.15zM877 829h1.15v1.15h-1.15zM877 848h1.15v1.15h-1.15zM877 867h1.15v1.15h-1.15zM877 885h1.15v1.15h-1.15zM877 904h1.15v1.15h-1.15zM877 923h1.15v1.15h-1.15zM877 941h1.15v1.15h-1.15zM877 960h1.15v1.15h-1.15zM877 979h1.15v1.15h-1.15zM1052 62h1.15v1.15h-1.15zM1052 81h1.15v1.15h-1.15zM1052 100h1.15v1.15h-1.15zM1052 118h1.15v1.15h-1.15zM1052 137h1.15v1.15h-1.15zM1052 156h1.15v1.15h-1.15zM1052 174h1.15v1.15h-1.15zM1052 193h1.15v1.15h-1.15zM1052 212h1.15v1.15h-1.15zM1052 231h1.15v1.15h-1.15zM1052 249h1.15v1.15h-1.15zM1052 268h1.15v1.15h-1.15zM1052 287h1.15v1.15h-1.15zM1052 305h1.15v1.15h-1.15zM1052 324h1.15v1.15h-1.15zM1052 343h1.15v1.15h-1.15zM1052 361h1.15v1.15h-1.15zM1052 380h1.15v1.15h-1.15zM1052 399h1.15v1.15h-1.15zM1052 418h1.15v1.15h-1.15zM1052 436h1.15v1.15h-1.15zM1052 455h1.15v1.15h-1.15zM1052 474h1.15v1.15h-1.15zM1052 492h1.15v1.15h-1.15zM1052 511h1.15v1.15h-1.15zM1052 530h1.15v1.15h-1.15zM1052 549h1.15v1.15h-1.15zM1052 567h1.15v1.15h-1.15zM1052 586h1.15v1.15h-1.15zM1052 605h1.15v1.15h-1.15zM1052 623h1.15v1.15h-1.15zM1052 642h1.15v1.15h-1.15zM1052 661h1.15v1.15h-1.15zM1052 679h1.15v1.15h-1.15zM1052 698h1.15v1.15h-1.15zM1052 717h1.15v1.15h-1.15zM1052 736h1.15v1.15h-1.15zM1052 754h1.15v1.15h-1.15zM1052 773h1.15v1.15h-1.15zM1052 792h1.15v1.15h-1.15zM1052 810h1.15v1.15h-1.15zM1052 829h1.15v1.15h-1.15zM1052 848h1.15v1.15h-1.15zM1052 867h1.15v1.15h-1.15zM1052 885h1.15v1.15h-1.15zM1052 904h1.15v1.15h-1.15zM1052 923h1.15v1.15h-1.15zM1052 941h1.15v1.15h-1.15zM1052 960h1.15v1.15h-1.15zM1052 979h1.15v1.15h-1.15zM1226 62h1.15v1.15h-1.15zM1226 81h1.15v1.15h-1.15zM1226 100h1.15v1.15h-1.15zM1226 118h1.15v1.15h-1.15zM1226 137h1.15v1.15h-1.15zM1226 156h1.15v1.15h-1.15zM1226 174h1.15v1.15h-1.15zM1226 193h1.15v1.15h-1.15zM1226 212h1.15v1.15h-1.15zM1226 231h1.15v1.15h-1.15zM1226 249h1.15v1.15h-1.15zM1226 268h1.15v1.15h-1.15zM1226 287h1.15v1.15h-1.15zM1226 305h1.15v1.15h-1.15zM1226 324h1.15v1.15h-1.15zM1226 343h1.15v1.15h-1.15zM1226 361h1.15v1.15h-1.15zM1226 380h1.15v1.15h-1.15zM1226 399h1.15v1.15h-1.15zM1226 418h1.15v1.15h-1.15zM1226 436h1.15v1.15h-1.15zM1226 455h1.15v1.15h-1.15zM1226 474h1.15v1.15h-1.15zM1226 492h1.15v1.15h-1.15zM1226 511h1.15v1.15h-1.15zM1226 530h1.15v1.15h-1.15zM1226 549h1.15v1.15h-1.15zM1226 567h1.15v1.15h-1.15zM1226 586h1.15v1.15h-1.15zM1226 605h1.15v1.15h-1.15zM1226 623h1.15v1.15h-1.15zM1226 642h1.15v1.15h-1.15zM1226 661h1.15v1.15h-1.15zM1226 679h1.15v1.15h-1.15zM1226 698h1.15v1.15h-1.15zM1226 717h1.15v1.15h-1.15zM1226 736h1.15v1.15h-1.15zM1226 754h1.15v1.15h-1.15zM1226 773h1.15v1.15h-1.15zM1226 792h1.15v1.15h-1.15zM1226 810h1.15v1.15h-1.15zM1226 829h1.15v1.15h-1.15zM1226 848h1.15v1.15h-1.15zM1226 867h1.15v1.15h-1.15zM1226 885h1.15v1.15h-1.15zM1226 904h1.15v1.15h-1.15zM1226 923h1.15v1.15h-1.15zM1226 941h1.15v1.15h-1.15zM1226 960h1.15v1.15h-1.15zM1226 979h1.15v1.15h-1.15zM1401 62h1.15v1.15h-1.15zM1401 81h1.15v1.15h-1.15zM1401 100h1.15v1.15h-1.15zM1401 118h1.15v1.15h-1.15zM1401 137h1.15v1.15h-1.15zM1401 156h1.15v1.15h-1.15zM1401 174h1.15v1.15h-1.15zM1401 193h1.15v1.15h-1.15zM1401 212h1.15v1.15h-1.15zM1401 231h1.15v1.15h-1.15zM1401 249h1.15v1.15h-1.15zM1401 268h1.15v1.15h-1.15zM1401 287h1.15v1.15h-1.15zM1401 305h1.15v1.15h-1.15zM1401 324h1.15v1.15h-1.15zM1401 343h1.15v1.15h-1.15zM1401 361h1.15v1.15h-1.15zM1401 380h1.15v1.15h-1.15zM1401 399h1.15v1.15h-1.15zM1401 418h1.15v1.15h-1.15zM1401 436h1.15v1.15h-1.15zM1401 455h1.15v1.15h-1.15zM1401 474h1.15v1.15h-1.15zM1401 492h1.15v1.15h-1.15zM1401 511h1.15v1.15h-1.15zM1401 530h1.15v1.15h-1.15zM1401 549h1.15v1.15h-1.15zM1401 567h1.15v1.15h-1.15zM1401 586h1.15v1.15h-1.15zM1401 605h1.15v1.15h-1.15zM1401 623h1.15v1.15h-1.15zM1401 642h1.15v1.15h-1.15zM1401 661h1.15v1.15h-1.15zM1401 679h1.15v1.15h-1.15zM1401 698h1.15v1.15h-1.15zM1401 717h1.15v1.15h-1.15zM1401 736h1.15v1.15h-1.15zM1401 754h1.15v1.15h-1.15zM1401 773h1.15v1.15h-1.15zM1401 792h1.15v1.15h-1.15zM1401 810h1.15v1.15h-1.15zM1401 829h1.15v1.15h-1.15zM1401 848h1.15v1.15h-1.15zM1401 867h1.15v1.15h-1.15zM1401 885h1.15v1.15h-1.15zM1401 904h1.15v1.15h-1.15zM1401 923h1.15v1.15h-1.15zM1401 941h1.15v1.15h-1.15zM1401 960h1.15v1.15h-1.15zM1401 979h1.15v1.15h-1.15zM1576 62h1.15v1.15h-1.15zM1576 81h1.15v1.15h-1.15zM1576 100h1.15v1.15h-1.15zM1576 118h1.15v1.15h-1.15zM1576 137h1.15v1.15h-1.15zM1576 156h1.15v1.15h-1.15zM1576 174h1.15v1.15h-1.15zM1576 193h1.15v1.15h-1.15zM1576 212h1.15v1.15h-1.15zM1576 231h1.15v1.15h-1.15zM1576 249h1.15v1.15h-1.15zM1576 268h1.15v1.15h-1.15zM1576 287h1.15v1.15h-1.15zM1576 305h1.15v1.15h-1.15zM1576 324h1.15v1.15h-1.15zM1576 343h1.15v1.15h-1.15zM1576 361h1.15v1.15h-1.15zM1576 380h1.15v1.15h-1.15zM1576 399h1.15v1.15h-1.15zM1576 418h1.15v1.15h-1.15zM1576 436h1.15v1.15h-1.15zM1576 455h1.15v1.15h-1.15zM1576 474h1.15v1.15h-1.15zM1576 492h1.15v1.15h-1.15zM1576 511h1.15v1.15h-1.15zM1576 530h1.15v1.15h-1.15zM1576 549h1.15v1.15h-1.15zM1576 567h1.15v1.15h-1.15zM1576 586h1.15v1.15h-1.15zM1576 605h1.15v1.15h-1.15zM1576 623h1.15v1.15h-1.15zM1576 642h1.15v1.15h-1.15zM1576 661h1.15v1.15h-1.15zM1576 679h1.15v1.15h-1.15zM1576 698h1.15v1.15h-1.15zM1576 717h1.15v1.15h-1.15zM1576 736h1.15v1.15h-1.15zM1576 754h1.15v1.15h-1.15zM1576 773h1.15v1.15h-1.15zM1576 792h1.15v1.15h-1.15zM1576 810h1.15v1.15h-1.15zM1576 829h1.15v1.15h-1.15zM1576 848h1.15v1.15h-1.15zM1576 867h1.15v1.15h-1.15zM1576 885h1.15v1.15h-1.15zM1576 904h1.15v1.15h-1.15zM1576 923h1.15v1.15h-1.15zM1576 941h1.15v1.15h-1.15zM1576 960h1.15v1.15h-1.15zM1576 979h1.15v1.15h-1.15z" fill="#d0d0d0"/>
<path d="M6 324.5H1720" stroke="#c4c4c4" stroke-width="1.3" stroke-dasharray="5 5"/>
<path d="M178.5 92V992" stroke="#c4c4c4" stroke-width="1.3" stroke-dasharray="5 5"/>
<text x="1745.50" y="142.10" font-size="13.81" fill="#ece830" text-anchor="end">20 V</text>
<text x="1745.50" y="235.63" font-size="13.81" fill="#ece830" text-anchor="end">10 V</text>
<text x="1745.50" y="329.16" font-size="13.81" fill="#ece830" text-anchor="end">0 V</text>
<text x="1745.50" y="422.69" font-size="13.81" fill="#ece830" text-anchor="end">-10 V</text>
<text x="1745.50" y="516.22" font-size="13.81" fill="#ece830" text-anchor="end">-20 V</text>
<text x="1745.50" y="609.75" font-size="13.81" fill="#ece830" text-anchor="end">-30 V</text>
<text x="1745.50" y="703.28" font-size="13.81" fill="#ece830" text-anchor="end">-40 V</text>
<text x="1745.50" y="796.81" font-size="13.81" fill="#ece830" text-anchor="end">-50 V</text>
<text x="1745.50" y="890.34" font-size="13.81" fill="#ece830" text-anchor="end">-60 V</text>
<text x="1745.50" y="983.87" font-size="13.81" fill="#ece830" text-anchor="end">-70 V</text>
<text x="178.25" y="987.00" font-size="13.08" fill="#a8a8a8" text-anchor="middle">0 s</text>
<text x="353.00" y="987.00" font-size="13.08" fill="#a8a8a8" text-anchor="middle">1 µs</text>
<text x="527.75" y="987.00" font-size="13.08" fill="#a8a8a8" text-anchor="middle">2 µs</text>
<text x="702.50" y="987.00" font-size="13.08" fill="#a8a8a8" text-anchor="middle">3 µs</text>
<text x="877.25" y="987.00" font-size="13.08" fill="#a8a8a8" text-anchor="middle">4 µs</text>
<text x="1052.00" y="987.00" font-size="13.08" fill="#a8a8a8" text-anchor="middle">5 µs</text>
<text x="1226.75" y="987.00" font-size="13.08" fill="#a8a8a8" text-anchor="middle">6 µs</text>
<text x="1401.50" y="987.00" font-size="13.08" fill="#a8a8a8" text-anchor="middle">7 µs</text>
<text x="1576.25" y="987.00" font-size="13.08" fill="#a8a8a8" text-anchor="middle">8 µs</text>
<text x="111.75" y="356.25" font-size="19.99" fill="#f0e830" textLength="62.50" lengthAdjust="spacingAndGlyphs">HS VGS</text>
<text x="92.50" y="608.00" font-size="20.71" fill="#a8dc40" textLength="58.25" lengthAdjust="spacingAndGlyphs">DESAT</text>
<text x="100.00" y="812.50" font-size="19.99" fill="#f59030" textLength="40.50" lengthAdjust="spacingAndGlyphs">nFLT</text>
<rect x="3.00" y="862.00" width="23.00" height="1.00" fill="#f0e830" shape-rendering="crispEdges"/>
<rect x="881.00" y="58.00" width="10.00" height="934.00" fill="#ffffff" fill-opacity="0.09"/>
<rect x="884.90" y="78.50" width="1.40" height="914.00" fill="#f4f4f4"/>
<rect x="735.00" y="87.50" width="300.00" height="47.50" fill="#3a3a3a" rx="4.00" fill-opacity="0.93"/>
<text x="739.25" y="105.00" font-size="15.26" fill="#dedede" textLength="80.75" lengthAdjust="spacingAndGlyphs">Δt: 1.945 ns</text>
<text x="846.25" y="105.00" font-size="15.26" fill="#dedede" textLength="117.75" lengthAdjust="spacingAndGlyphs">1/Δt: 514.12 MHz</text>
<text x="739.25" y="125.00" font-size="15.26" fill="#dedede" textLength="107.00" lengthAdjust="spacingAndGlyphs">Δv: 495.264 mV</text>
<text x="867.70" y="125.00" font-size="15.26" fill="#dedede" textLength="130.30" lengthAdjust="spacingAndGlyphs">Δv/Δt: 254.62 MV/s</text>
<rect x="745.00" y="139.50" width="139.00" height="43.00" fill="#3a3a3a" rx="4.00" fill-opacity="0.93"/>
<text x="749.25" y="155.00" font-size="15.26" fill="#dedede" textLength="70.25" lengthAdjust="spacingAndGlyphs">t: 4.046 µs</text>
<text x="749.25" y="173.00" font-size="15.26" fill="#dedede" textLength="72.00" lengthAdjust="spacingAndGlyphs">v: -3.508 V</text>
<rect x="887.00" y="187.20" width="139.00" height="43.20" fill="#3a3a3a" rx="4.00" fill-opacity="0.93"/>
<text x="890.40" y="202.80" font-size="15.26" fill="#dedede" textLength="70.60" lengthAdjust="spacingAndGlyphs">t: 4.048 µs</text>
<text x="890.40" y="220.70" font-size="15.26" fill="#dedede" textLength="72.60" lengthAdjust="spacingAndGlyphs">v: -4.003 V</text>
<rect x="860.00" y="58.80" width="25.00" height="19.80" fill="#e0d838" rx="3.00"/>
<rect x="866.00" y="58.80" width="19.00" height="19.80" fill="#3a3a20" fill-opacity="0.55"/>
<circle cx="875" cy="68.7" r="8.3" fill="#2a8fd8"/>
<text x="875.00" y="73.50" font-size="13.00" fill="#f0f0f0" text-anchor="middle">B</text>
<rect x="887.00" y="58.80" width="25.40" height="19.80" fill="#e0d838" rx="3.00"/>
<text x="899.70" y="74.00" font-size="14.00" fill="#1a1a1a" textLength="17.00" lengthAdjust="spacingAndGlyphs" text-anchor="middle">C1</text>
<g fill="none" stroke-linecap="round"><path d="M877.8 349L880.6 351.8M893.6 349L890.8 351.8M877.8 369.5L880.8 366.6M893.6 369.5L890.6 366.6M878.6 354L881.4 356.6M892.8 354L890 356.6M878.6 364.6L881.4 362.2M892.8 364.6L890 362.2" stroke="#202020" stroke-width="2.6"/><path d="M877.8 349L880.6 351.8M893.6 349L890.8 351.8M877.8 369.5L880.8 366.6M893.6 369.5L890.6 366.6M878.6 354L881.4 356.6M892.8 354L890 356.6M878.6 364.6L881.4 362.2M892.8 364.6L890 362.2" stroke="#c8c8c8" stroke-width="1.3"/><ellipse cx="885.6" cy="355.8" rx="3.4" ry="3.2" stroke="#b8b8b8" stroke-width="1.2"/><ellipse cx="885.6" cy="362" rx="3.6" ry="4" stroke="#b8b8b8" stroke-width="1.3"/></g>
<path d="M167.5 58H188.5L178 67Z" fill="#f08c28"/>
<path d="M169 69H187V88H181.5L178 95.5L174.5 88H169Z" fill="#000" stroke="#f29028" stroke-width="2"/>
<text x="177.80" y="83.90" font-size="15.80" fill="#f29028" text-anchor="middle">T</text>
<path d="M1711 65.5H1741.5Q1743.5 65.5 1743.5 67.5V98Z" fill="#505050" stroke="#505050" stroke-width="1.5" stroke-linejoin="round"/>
<circle cx="1737.1" cy="71.4" r="4.2" fill="none" stroke="#a8a8a8" stroke-width="1.5"/><path d="M1733.6 75.2L1728 80.5" stroke="#a8a8a8" stroke-width="2.6" stroke-linecap="round"/>
<path d="M1730 275.75L1742.5 265V273.75H1751V278H1742.5V286.25Z" fill="#f5ef20"/>
<path d="M5.5 365Q5.5 362.5 8 362.5H77L83.75 374.75L77 387H8Q5.5 387 5.5 384.5Z" fill="#181808" stroke="#f0e830" stroke-width="1.5"/>
<path d="M5.5 365Q5.5 362.5 8 362.5H33.75V387H8Q5.5 387 5.5 384.5Z" fill="#f0e830"/>
<text x="11.00" y="377.50" font-size="12.50" fill="#1a1a1a" textLength="16.50" lengthAdjust="spacingAndGlyphs">C 1</text>
<text x="37.50" y="377.50" font-size="12.50" fill="#f0e830" textLength="38.75" lengthAdjust="spacingAndGlyphs">-5.30 V</text>
<path d="M6 630Q6 627.5 8.5 627.5H31L41.25 640L31 652.5H8.5Q6 652.5 6 650Z" fill="#1a2210" stroke="#8ac43f" stroke-width="1.5"/>
<text x="15.00" y="643.00" font-size="12.50" fill="#8ac43f" textLength="17.50" lengthAdjust="spacingAndGlyphs">C 4</text>
<path d="M6 917.5Q6 915 8.5 915H31.5L42 927.75L31.5 940.5H8.5Q6 940.5 6 938Z" fill="#231508" stroke="#f08c28" stroke-width="1.5"/>
<text x="15.00" y="931.25" font-size="12.50" fill="#f08c28" textLength="17.50" lengthAdjust="spacingAndGlyphs">C 5</text>
</g>
<text x="20.00" y="19.25" font-size="17.08" fill="#e6e6e6" textLength="25.50" lengthAdjust="spacingAndGlyphs">File</text>
<text x="86.00" y="19.25" font-size="17.08" fill="#e6e6e6" textLength="28.75" lengthAdjust="spacingAndGlyphs">Edit</text>
<text x="155.50" y="19.25" font-size="17.08" fill="#e6e6e6" textLength="44.50" lengthAdjust="spacingAndGlyphs">Utility</text>
<text x="240.75" y="19.25" font-size="17.08" fill="#e6e6e6" textLength="34.25" lengthAdjust="spacingAndGlyphs">Help</text>
<rect x="0.00" y="29.00" width="1754.00" height="3.00" fill="#e4e4e4"/>
<rect x="0.00" y="29.00" width="2.00" height="967.00" fill="#b8b8bc"/>
<rect x="2.00" y="29.00" width="1.00" height="967.00" fill="#f2f2f6"/>
<rect x="1751.00" y="29.00" width="3.00" height="967.00" fill="#e4e4e4"/>
<rect x="0.00" y="993.00" width="1754.00" height="3.00" fill="#e4e4e4"/>
<rect x="3.00" y="32.00" width="1748.00" height="24.00" fill="#333333"/>
<rect x="3.00" y="56.00" width="1748.00" height="2.00" fill="#6a6a6a"/>
<text x="16.50" y="50.00" font-size="16.35" fill="#e0e0e0" textLength="124.75" lengthAdjust="spacingAndGlyphs">Waveform View</text>
<path d="M592 36.5H587V52.5H592M587 45H1167M1162 36.5H1167V52.5H1162" stroke="#c8c8c8" stroke-width="1.6" fill="none"/>
<path d="M881 32V56" stroke="#bdbdbd" stroke-width="1.5" stroke-dasharray="3 2"/>
<path d="M636 33H651L643.8 38Z" fill="#f28c22"/>
<path d="M637.8 40.2H650.2V51.5H646L643.8 55.5L641.6 51.5H637.8Z" fill="#000" stroke="#f28c22" stroke-width="1.7"/>
<text x="643.90" y="50.00" font-size="10.50" fill="#e88a30" font-weight="bold" text-anchor="middle">T</text>
<rect x="1769.00" y="29.00" width="151.00" height="967.00" fill="#2d2d2d"/>
<rect x="1769.00" y="29.00" width="151.00" height="1.00" fill="#6a5e55"/>
<rect x="1769.00" y="995.00" width="151.00" height="1.00" fill="#6a5e55"/>
<rect x="1769.00" y="29.00" width="1.00" height="967.00" fill="#5c5c5c"/>
<text x="1786.60" y="25.40" font-size="30.60" fill="#ffffff" textLength="115.40" lengthAdjust="spacingAndGlyphs" font-weight="bold" stroke="#ffffff" stroke-width="1.1" stroke-linejoin="round">Tektronix</text>
<path d="M1815.2 25.7H1820.6L1830.4 9.5H1825Z" fill="#22b8d8"/>
<text x="1802.70" y="44.10" font-size="16.57" fill="#e8e8e8" textLength="84.00" lengthAdjust="spacingAndGlyphs" font-weight="bold">Add New...</text>
<rect x="1778.50" y="55.00" width="62.00" height="35.00" fill="#29b4e6" rx="4.50" stroke="#4d8ea6" stroke-width="1.00"/>
<text x="1785.00" y="76.75" font-size="15.12" fill="#000000" textLength="50.00" lengthAdjust="spacingAndGlyphs">Cursors</text>
<rect x="1850.50" y="55.00" width="62.00" height="35.00" fill="url(#btng)" rx="4.50" stroke="#5a524b" stroke-width="1.00"/>
<text x="1856.25" y="76.75" font-size="15.12" fill="#f0f0f0" textLength="49.25" lengthAdjust="spacingAndGlyphs">Callout</text>
<rect x="1778.50" y="100.50" width="62.00" height="35.50" fill="url(#btng)" rx="4.50" stroke="#5a524b" stroke-width="1.00"/>
<text x="1780.00" y="122.80" font-size="15.12" fill="#f0f0f0" textLength="58.75" lengthAdjust="spacingAndGlyphs">Measure</text>
<rect x="1850.50" y="100.50" width="62.00" height="35.50" fill="url(#btng)" rx="4.50" stroke="#5a524b" stroke-width="1.00"/>
<text x="1858.25" y="122.80" font-size="15.12" fill="#f0f0f0" textLength="46.00" lengthAdjust="spacingAndGlyphs">Search</text>
<rect x="1778.50" y="146.50" width="62.00" height="35.50" fill="url(#btng)" rx="4.50" stroke="#5a524b" stroke-width="1.00"/>
<text x="1785.75" y="161.25" font-size="15.12" fill="#f0f0f0" textLength="47.50" lengthAdjust="spacingAndGlyphs">Results</text>
<text x="1792.00" y="177.00" font-size="15.12" fill="#f0f0f0" textLength="35.50" lengthAdjust="spacingAndGlyphs">Table</text>
<rect x="1850.50" y="146.50" width="62.00" height="35.50" fill="url(#btng)" rx="4.50" stroke="#5a524b" stroke-width="1.00"/>
<text x="1867.50" y="169.25" font-size="15.12" fill="#f0f0f0" textLength="27.50" lengthAdjust="spacingAndGlyphs">Plot</text>
<rect x="1773.00" y="189.00" width="143.00" height="1.00" fill="#5e5750"/>
<rect x="1778.50" y="196.50" width="62.00" height="35.50" fill="url(#btng)" rx="4.50" stroke="#5a524b" stroke-width="1.00"/>
<rect x="1850.50" y="196.50" width="62.00" height="35.50" fill="url(#btng)" rx="4.50" stroke="#5a524b" stroke-width="1.00"/>
<text x="1856.25" y="219.25" font-size="15.12" fill="#f0f0f0" textLength="50.00" lengthAdjust="spacingAndGlyphs">More...</text>
<rect x="1797.8" y="202.6" width="22.4" height="19.6" fill="none" stroke="#c4c4c4" stroke-width="1.7" stroke-dasharray="2.6 2.2"/>
<circle cx="1811" cy="211" r="4.6" fill="none" stroke="#c4c4c4" stroke-width="1.7"/><path d="M1807.6 214.4L1803 218" stroke="#c4c4c4" stroke-width="2.4" stroke-linecap="round"/>
<path d="M1815.5 217L1823.5 224L1820 224.3L1821.8 227.5L1820.3 228.2L1818.5 225L1816 227Z" fill="#c4c4c4"/>
<rect x="1773.00" y="241.00" width="143.00" height="1.00" fill="#5e5750"/>
<path d="M1773 274.25V260Q1773 255 1778 255H1912Q1917 255 1917 260V274.25Z" fill="#000"/>
<path d="M1773 274.25H1917V306.75Q1917 311.75 1912 311.75H1778Q1773 311.75 1773 306.75Z" fill="#c9c9c9"/>
<text x="1778.00" y="269.50" font-size="16.72" fill="#ffffff" textLength="56.50" lengthAdjust="spacingAndGlyphs">Search 1</text>
<rect x="1889.00" y="259.50" width="22.00" height="11.00" fill="#e63a5a" rx="5.50"/>
<text x="1900.00" y="268.70" font-size="10.00" fill="#ffffff" text-anchor="middle">3</text>
<text x="1778.00" y="289.25" font-size="15.26" fill="#1a1a1a" textLength="81.50" lengthAdjust="spacingAndGlyphs">Search: Edge</text>
<text x="1778.00" y="307.50" font-size="15.26" fill="#1a1a1a" textLength="59.00" lengthAdjust="spacingAndGlyphs">Events: --</text>
<path d="M1894.25 278H1911.75L1903 291.25Z" fill="#c77fc0"/>
<circle cx="1762" cy="503.5" r="2.2" fill="#c8c8c8"/>
<circle cx="1762" cy="512.3" r="2.2" fill="#c8c8c8"/>
<circle cx="1762" cy="520.8" r="2.2" fill="#c8c8c8"/>
<path d="M3.00 1020V1005.5Q3.00 1000.75 7.75 1000.75H88.25Q93.00 1000.75 93.00 1005.5V1020Z" fill="#f5ef3a"/>
<path d="M3.00 1020H93.00V1072Q93.00 1076.75 88.25 1076.75H7.75Q3.00 1076.75 3.00 1072Z" fill="#c9c9c9"/>
<text x="8.75" y="1015.00" font-size="15.26" fill="#000" textLength="28.25" lengthAdjust="spacingAndGlyphs">Ch 1</text>
<text x="8.75" y="1035.00" font-size="15.55" fill="#1a1a1a" textLength="51.75" lengthAdjust="spacingAndGlyphs">10 V/div</text>
<text x="8.75" y="1053.75" font-size="15.55" fill="#1a1a1a" textLength="30.50" lengthAdjust="spacingAndGlyphs">50 Ω</text>
<text x="8.75" y="1072.50" font-size="15.55" fill="#1a1a1a" textLength="38.75" lengthAdjust="spacingAndGlyphs">1 GHz</text>
<path d="M98.00 1020V1005.5Q98.00 1000.75 102.75 1000.75H183.25Q188.00 1000.75 188.00 1005.5V1020Z" fill="#8c3646"/>
<path d="M98.00 1020H188.00V1072Q188.00 1076.75 183.25 1076.75H102.75Q98.00 1076.75 98.00 1072Z" fill="#7e7e7e"/>
<text x="103.75" y="1015.00" font-size="15.26" fill="#bdbdbd" textLength="29.75" lengthAdjust="spacingAndGlyphs">Ch 3</text>
<rect x="98.00" y="1020.00" width="90.00" height="1.20" fill="#6a6a6a"/>
<path d="M148.75 1002V1012" stroke="#111" stroke-width="1.6"/><path d="M144.6 1009L148.75 1016.3L152.9 1009Z" fill="#111"/>
<text x="103.25" y="1035.00" font-size="15.55" fill="#1a1a1a" textLength="53.00" lengthAdjust="spacingAndGlyphs">20 A/div</text>
<text x="103.25" y="1053.75" font-size="15.55" fill="#1a1a1a" textLength="36.00" lengthAdjust="spacingAndGlyphs">1 MΩ</text>
<text x="103.25" y="1072.50" font-size="15.55" fill="#1a1a1a" textLength="58.50" lengthAdjust="spacingAndGlyphs">120 MHz</text>
<text x="169.50" y="1066.00" font-size="9.50" fill="#1a1a1a" textLength="6.00" lengthAdjust="spacingAndGlyphs">B</text>
<text x="175.00" y="1070.00" font-size="9.00" fill="#1a1a1a" textLength="6.50" lengthAdjust="spacingAndGlyphs">w</text>
<path d="M193.00 1020V1005.5Q193.00 1000.75 197.75 1000.75H278.25Q283.00 1000.75 283.00 1005.5V1020Z" fill="#2f3d22"/>
<path d="M193.00 1020H283.00V1072Q283.00 1076.75 278.25 1076.75H197.75Q193.00 1076.75 193.00 1072Z" fill="#c9c9c9"/>
<text x="198.75" y="1015.00" font-size="15.26" fill="#8ed43c" textLength="30.00" lengthAdjust="spacingAndGlyphs">Ch 4</text>
<text x="198.25" y="1035.00" font-size="15.55" fill="#1a1a1a" textLength="43.50" lengthAdjust="spacingAndGlyphs">5 V/div</text>
<text x="198.25" y="1072.50" font-size="15.55" fill="#1a1a1a" textLength="39.25" lengthAdjust="spacingAndGlyphs">1 GHz</text>
<path d="M288.00 1020V1005.5Q288.00 1000.75 292.75 1000.75H373.25Q378.00 1000.75 378.00 1005.5V1020Z" fill="#4a3220"/>
<path d="M288.00 1020H378.00V1072Q378.00 1076.75 373.25 1076.75H292.75Q288.00 1076.75 288.00 1072Z" fill="#c9c9c9"/>
<text x="293.75" y="1015.00" font-size="15.26" fill="#f59a32" textLength="30.00" lengthAdjust="spacingAndGlyphs">Ch 5</text>
<text x="293.25" y="1035.00" font-size="15.55" fill="#1a1a1a" textLength="43.50" lengthAdjust="spacingAndGlyphs">5 V/div</text>
<text x="293.25" y="1072.50" font-size="15.55" fill="#1a1a1a" textLength="39.25" lengthAdjust="spacingAndGlyphs">1 GHz</text>
<path d="M200.75 1052V1045Q200.75 1041.5 206.25 1041.5Q211.75 1041.5 211.75 1045V1047" fill="none" stroke="#222" stroke-width="1.3"/><rect x="199.50" y="1046.5" width="3" height="6" fill="#eee" stroke="#222" stroke-width="1"/><rect x="210.25" y="1047" width="3" height="5.5" fill="#eee" stroke="#222" stroke-width="1"/><path d="M203.25 1046Q206.25 1043 209.25 1046" fill="none" stroke="#222" stroke-width="1.2"/>
<path d="M295.75 1052V1045Q295.75 1041.5 301.25 1041.5Q306.75 1041.5 306.75 1045V1047" fill="none" stroke="#222" stroke-width="1.3"/><rect x="294.50" y="1046.5" width="3" height="6" fill="#eee" stroke="#222" stroke-width="1"/><rect x="305.25" y="1047" width="3" height="5.5" fill="#eee" stroke="#222" stroke-width="1"/><path d="M298.25 1046Q301.25 1043 304.25 1046" fill="none" stroke="#222" stroke-width="1.2"/>
<rect x="933.75" y="999.50" width="38.00" height="76.50" fill="url(#nbg)" rx="5.00" stroke="#544e48" stroke-width="1.50"/>
<rect x="937.50" y="1007.25" width="30.50" height="1.80" fill="#2ad2e6"/>
<text x="952.75" y="1049.80" font-size="21.22" fill="#e8e8e8" text-anchor="middle">2</text>
<rect x="979.05" y="999.50" width="37.90" height="76.50" fill="url(#nbg)" rx="5.00" stroke="#544e48" stroke-width="1.50"/>
<rect x="982.80" y="1007.25" width="30.40" height="1.80" fill="#3434c8"/>
<text x="998.00" y="1049.80" font-size="21.22" fill="#e8e8e8" text-anchor="middle">6</text>
<rect x="1024.25" y="999.50" width="37.90" height="76.50" fill="url(#nbg)" rx="5.00" stroke="#544e48" stroke-width="1.50"/>
<rect x="1028.00" y="1007.25" width="30.40" height="1.80" fill="#e0489a"/>
<text x="1043.20" y="1049.80" font-size="21.22" fill="#e8e8e8" text-anchor="middle">7</text>
<rect x="1068.75" y="999.50" width="38.00" height="76.50" fill="url(#nbg)" rx="5.00" stroke="#544e48" stroke-width="1.50"/>
<rect x="1072.50" y="1007.25" width="30.50" height="1.80" fill="#26d2a0"/>
<text x="1087.75" y="1049.80" font-size="21.22" fill="#e8e8e8" text-anchor="middle">8</text>
<rect x="1117.50" y="1002.00" width="1.20" height="75.00" fill="#54504c"/>
<rect x="1130.05" y="999.50" width="37.60" height="76.50" fill="url(#nbg)" rx="5.00" stroke="#544e48" stroke-width="1.50"/>
<rect x="1133.80" y="1007.25" width="30.10" height="1.80" fill="#f0902c"/>
<text x="1148.85" y="1032.30" font-size="17.01" fill="#e8e8e8" textLength="26.80" lengthAdjust="spacingAndGlyphs" text-anchor="middle">Add</text>
<text x="1148.85" y="1048.30" font-size="17.01" fill="#e8e8e8" textLength="28.60" lengthAdjust="spacingAndGlyphs" text-anchor="middle">New</text>
<text x="1148.85" y="1064.30" font-size="17.01" fill="#e8e8e8" textLength="33.30" lengthAdjust="spacingAndGlyphs" text-anchor="middle">Math</text>
<rect x="1175.25" y="999.50" width="37.60" height="76.50" fill="url(#nbg)" rx="5.00" stroke="#544e48" stroke-width="1.50"/>
<rect x="1179.00" y="1007.25" width="30.10" height="1.80" fill="#b4b4c4"/>
<text x="1194.05" y="1032.30" font-size="17.01" fill="#e8e8e8" textLength="26.80" lengthAdjust="spacingAndGlyphs" text-anchor="middle">Add</text>
<text x="1194.05" y="1048.30" font-size="17.01" fill="#e8e8e8" textLength="28.60" lengthAdjust="spacingAndGlyphs" text-anchor="middle">New</text>
<text x="1194.05" y="1064.30" font-size="17.01" fill="#e8e8e8" textLength="20.50" lengthAdjust="spacingAndGlyphs" text-anchor="middle">Ref</text>
<rect x="1220.15" y="999.50" width="37.30" height="76.50" fill="url(#nbg)" rx="5.00" stroke="#544e48" stroke-width="1.50"/>
<rect x="1223.90" y="1007.25" width="29.80" height="1.80" fill="#a050e0"/>
<text x="1238.80" y="1032.30" font-size="17.01" fill="#e8e8e8" textLength="26.80" lengthAdjust="spacingAndGlyphs" text-anchor="middle">Add</text>
<text x="1238.80" y="1048.30" font-size="17.01" fill="#e8e8e8" textLength="28.60" lengthAdjust="spacingAndGlyphs" text-anchor="middle">New</text>
<text x="1238.80" y="1064.30" font-size="17.01" fill="#e8e8e8" textLength="21.80" lengthAdjust="spacingAndGlyphs" text-anchor="middle">Bus</text>
<rect x="1268.50" y="1002.00" width="1.20" height="75.00" fill="#54504c"/>
<path d="M1280.60 1020.5V1006.5Q1280.60 1001.7 1285.40 1001.7H1473.50Q1478.30 1001.7 1478.30 1006.5V1020.5Z" fill="#575757"/>
<path d="M1280.60 1020.5H1478.30V1071.2Q1478.30 1076 1473.50 1076H1285.40Q1280.60 1076 1280.60 1071.2Z" fill="#c9c9c9"/>
<rect x="1280.60" y="1020.50" width="197.70" height="1.50" fill="#8a8a8a"/>
<rect x="1280.10" y="1001.2" width="198.70" height="75.3" rx="5" fill="none" stroke="#161616" stroke-width="1"/>
<text x="1286.60" y="1016.50" font-size="16.57" fill="#e6e6e6" textLength="72.30" lengthAdjust="spacingAndGlyphs">Horizontal</text>
<text x="1285.90" y="1035.20" font-size="15.70" fill="#1a1a1a" textLength="47.50" lengthAdjust="spacingAndGlyphs">1 µs/div</text>
<text x="1391.70" y="1035.20" font-size="15.70" fill="#1a1a1a" textLength="33.50" lengthAdjust="spacingAndGlyphs">10 µs</text>
<text x="1285.90" y="1054.10" font-size="15.70" fill="#1a1a1a" textLength="84.50" lengthAdjust="spacingAndGlyphs">SR: 6.25 GS/s</text>
<text x="1391.70" y="1054.10" font-size="15.70" fill="#1a1a1a" textLength="59.80" lengthAdjust="spacingAndGlyphs">160 ps/pt</text>
<text x="1285.90" y="1073.10" font-size="15.70" fill="#1a1a1a" textLength="81.60" lengthAdjust="spacingAndGlyphs">RL: 62.5 kpts</text>
<path d="M1391.5 1061.5H1399.5V1071H1397L1395.5 1074L1394 1071H1391.5Z" fill="#222" stroke="#f08c28" stroke-width="1.3"/>
<text x="1395.50" y="1069.50" font-size="7.50" fill="#f0f0f0" font-weight="bold" text-anchor="middle">T</text>
<text x="1405.40" y="1073.10" font-size="15.70" fill="#1a1a1a" textLength="29.20" lengthAdjust="spacingAndGlyphs">10%</text>
<path d="M1485.80 1020.5V1006.5Q1485.80 1001.7 1490.60 1001.7H1639.20Q1644.00 1001.7 1644.00 1006.5V1020.5Z" fill="#575757"/>
<path d="M1485.80 1020.5H1644.00V1071.2Q1644.00 1076 1639.20 1076H1490.60Q1485.80 1076 1485.80 1071.2Z" fill="#c9c9c9"/>
<rect x="1485.80" y="1020.50" width="158.20" height="1.50" fill="#8a8a8a"/>
<rect x="1485.30" y="1001.2" width="159.20" height="75.3" rx="5" fill="none" stroke="#161616" stroke-width="1"/>
<text x="1491.40" y="1016.50" font-size="16.57" fill="#e6e6e6" textLength="48.60" lengthAdjust="spacingAndGlyphs">Trigger</text>
<rect x="1490.50" y="1024.00" width="29.00" height="14.00" fill="#f5ef3a" rx="6.00" stroke="#333" stroke-width="1.00"/>
<text x="1505.00" y="1035.50" font-size="12.50" fill="#111" text-anchor="middle">1</text>
<path d="M1530.3 1035.6H1534.5L1541 1024.4H1545.5" fill="none" stroke="#5050a8" stroke-width="1.3"/>
<text x="1556.00" y="1035.00" font-size="15.70" fill="#1a1a1a" textLength="34.00" lengthAdjust="spacingAndGlyphs">5.2 V</text>
<path d="M1651.00 1020.5V1006.5Q1651.00 1001.7 1655.80 1001.7H1794.20Q1799.00 1001.7 1799.00 1006.5V1020.5Z" fill="#575757"/>
<path d="M1651.00 1020.5H1799.00V1071.2Q1799.00 1076 1794.20 1076H1655.80Q1651.00 1076 1651.00 1071.2Z" fill="#c9c9c9"/>
<rect x="1651.00" y="1020.50" width="148.00" height="1.50" fill="#8a8a8a"/>
<rect x="1650.50" y="1001.2" width="149.00" height="75.3" rx="5" fill="none" stroke="#161616" stroke-width="1"/>
<text x="1656.70" y="1016.50" font-size="16.57" fill="#e6e6e6" textLength="76.90" lengthAdjust="spacingAndGlyphs">Acquisition</text>
<text x="1655.30" y="1035.00" font-size="15.70" fill="#1a1a1a" textLength="34.70" lengthAdjust="spacingAndGlyphs">Auto,</text>
<text x="1735.80" y="1035.00" font-size="15.70" fill="#1a1a1a" textLength="49.50" lengthAdjust="spacingAndGlyphs">Analyze</text>
<text x="1655.30" y="1053.60" font-size="15.70" fill="#1a1a1a" textLength="89.40" lengthAdjust="spacingAndGlyphs">Sample: 8 bits</text>
<text x="1655.30" y="1072.50" font-size="15.70" fill="#1a1a1a" textLength="70.00" lengthAdjust="spacingAndGlyphs">Single: 1 /1</text>
<rect x="1811.00" y="999.50" width="1.20" height="76.50" fill="#5e5750"/>
<rect x="1822.50" y="999.40" width="89.00" height="34.60" fill="#fc1f27" rx="5.00" stroke="#5a4a4a" stroke-width="1.20"/>
<text x="1839.20" y="1020.30" font-size="14.97" fill="#ffffff" textLength="55.50" lengthAdjust="spacingAndGlyphs" font-weight="bold">Stopped</text>
</svg>
</body></html>
